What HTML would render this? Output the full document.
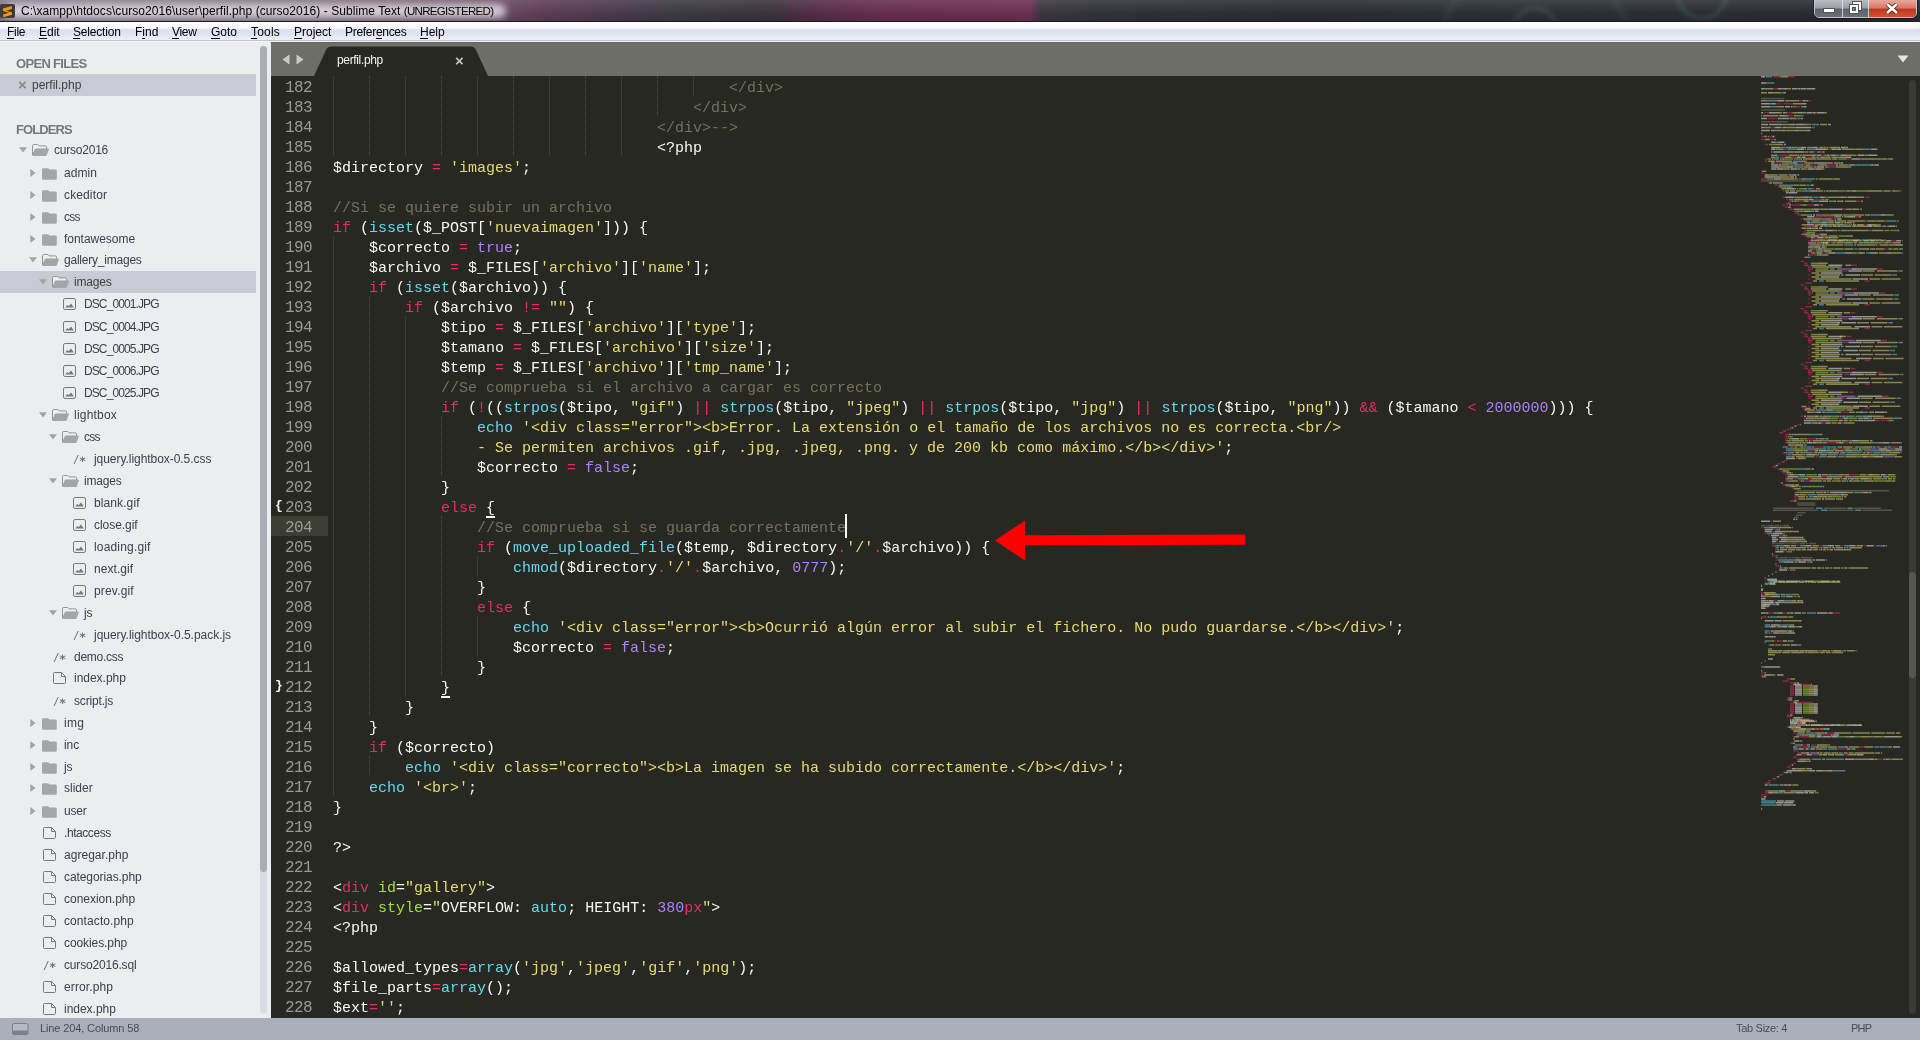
<!DOCTYPE html>
<html lang="es"><head><meta charset="utf-8"><title>perfil.php - Sublime Text</title>
<style>
*{margin:0;padding:0;box-sizing:border-box}
html,body{width:1920px;height:1040px;overflow:hidden;background:#272822}
body{position:relative;font-family:"Liberation Sans",sans-serif;font-size:12px;color:#3f4046}
#title{position:absolute;left:0;top:0;width:1920px;height:22px;background:#2b2c34;overflow:hidden;border-bottom:1px solid #1c1c20}
#wall1{position:absolute;left:0;top:0;width:1920px;height:21px;background:linear-gradient(90deg,#85788a 0,#7a6c7c 300px,#6c5068 490px,#5e3d57 540px,#4d3a4e 610px,#3c3a43 680px,#3a333d 770px,#552d46 815px,#672f4d 880px,#6c3051 1030px,#3c3641 1040px,#32333a 1100px,#2b2c34 1300px,#2b3036 1500px,#2a2b32 1920px)}
#wall2{position:absolute;left:0;top:0;width:1920px;height:21px;background:linear-gradient(180deg,rgba(255,255,255,.10) 0,rgba(255,255,255,0) 60%,rgba(0,0,0,.12) 100%),radial-gradient(circle at 1535px 31px,transparent 17px,rgba(80,125,112,.2) 22px,transparent 28px),radial-gradient(circle at 1702px -6px,transparent 19px,rgba(80,125,112,.2) 24px,transparent 30px),radial-gradient(circle at 1535px 60px,transparent 92px,rgba(70,110,100,.15) 99px,transparent 106px)}
#tglow{position:absolute;z-index:2;left:4px;top:4px;width:502px;height:14px;background:rgba(244,238,245,.74);border-radius:7px;filter:blur(3.5px)}
#logo{position:absolute;z-index:3;left:0;top:4px}
#ttext{position:absolute;z-index:3;left:21px;top:4px;font-size:12px;line-height:15px;color:#000;white-space:pre;letter-spacing:0.06px}#tt2{font-size:11.5px;letter-spacing:-0.68px}
#wbtn{position:absolute;z-index:3;left:1814px;top:-1px;width:103px;height:19px;border:1px solid rgba(235,238,245,.8);border-radius:0 0 5px 5px;display:flex;overflow:hidden;box-shadow:0 0 0 1px rgba(20,20,25,.7)}
.wb{height:18px;position:relative;border-right:1px solid rgba(235,238,245,.75)}
.wmin{width:28px;background:linear-gradient(180deg,#b9bcc2 0,#9a9da4 45%,#5e6169 50%,#6f727b 100%)}
.wmin i{position:absolute;left:9px;top:9px;width:10px;height:3px;background:#fff;box-shadow:0 0 0 1px #50535b}
.wmax{width:27px;background:linear-gradient(180deg,#b9bcc2 0,#9a9da4 45%,#5e6169 50%,#6f727b 100%)}
.wmax i{position:absolute;width:8px;height:8px;border:2px solid #fff;box-shadow:0 0 0 1px #50535b, inset 0 0 0 1px #50535b}
.wmax i.a{left:10px;top:2px}
.wmax i.b{left:7px;top:5px;background:#7c7f88}
.wclose{width:47px;border-right:0;background:linear-gradient(180deg,#e9a99c 0,#d8786a 45%,#c2341d 50%,#d2553a 100%)}
.wclose svg{position:absolute;left:16px;top:3px}
#menu{position:absolute;left:0;top:22px;width:1920px;height:20px;background:linear-gradient(180deg,#ffffff 0,#fbfbfe 4px,#f3f5fb 6.5px,#dde2f0 7.5px,#dde2f1 11px,#e4e8f4 14px,#eef0f8 18px,#bfc3d2 18px,#bfc3d2 19px,#f4f5fa 19px,#f4f5fa 20px)}
.mi{position:absolute;top:3px;font-size:12px;line-height:15px;color:#000;white-space:pre}
.mi .ul{position:absolute;top:13px;height:1px;background:#000}
#side{position:absolute;left:0;top:42px;width:271px;height:976px;background:#ecedf0;overflow:hidden}
#side .hd{position:absolute;left:16px;padding-top:1px;font-weight:bold;font-size:13px;line-height:14px;color:#77787c;white-space:pre}
#side .row{position:absolute;left:0;width:256px;height:22px;margin-top:-42px}
#side .hd{margin-top:-42px}
#side .row.sel{background:#c8cbd3}
.row .nm{position:absolute;top:4px;line-height:15px;font-size:12px;white-space:pre;color:#3f4046}
.row .x{position:absolute;top:3px;line-height:16px;font-size:15px;color:#85868b;font-weight:bold;margin-left:-0.5px}
.row .ic{position:absolute}
.row .cm{position:absolute;top:4px;font-family:"DejaVu Sans Mono",monospace;font-size:11px;line-height:15px;color:#707175;letter-spacing:-0.6px;white-space:pre}.row .cm b{font-weight:bold;font-size:12px;position:relative;top:0px}
#sscroll{position:absolute;left:260px;top:4px;width:7px;height:968px;background:#dadce1;border-radius:3.5px}
#sthumb{position:absolute;left:0;top:0;width:7px;height:826px;background:#aaadb4;border-radius:3.5px}
#tabs{position:absolute;left:271px;top:42px;width:1649px;height:34px;background:#6d6e68}
#tabshadow{position:absolute;left:0;top:0;width:100%;height:1px;background:#63645e}
#tabarrows{position:absolute;left:11px;top:12px}
#tab{position:absolute;left:43px;top:4px}
#tabname{position:absolute;left:66px;top:11px;letter-spacing:-0.35px;font-size:12px;line-height:15px;color:#f4f4f0;white-space:pre}
#tabx{position:absolute;left:184px;top:11px;font-size:15px;line-height:16px;color:#c8c8c2;font-weight:bold}
#tabdd{position:absolute;left:1626px;top:13px}
#ed{position:absolute;left:271px;top:76px;width:1649px;height:942px;background:#272822;overflow:hidden;font-family:"Liberation Mono",monospace;font-size:15px}
#ed>*{position:absolute}
#ed .ln,#ed .cl,#ed .gd,#ed .gb,#ed .bu,#curln,#caret{margin-top:-76px;margin-left:-271px}
.ln{left:272px;width:40px;height:20px;line-height:20px;padding-top:2px;font-size:16px;letter-spacing:-0.6px;text-align:right;color:#999a93;white-space:pre}
#curln{left:271px;top:516px;width:57px;height:20px;background:#3e3d32}
.cl{left:333px;height:20px;line-height:20px;padding-top:3px;color:#f8f8f2;white-space:pre;font-family:"Liberation Mono",monospace;font-size:15px}
.c{color:#75715e}.y{color:#e6db74}.p{color:#ea2a68}.b{color:#66d9ef}.u{color:#ae81ff}.g{color:#a6e22e}
.bu{width:9px;height:2px;background:#f8f8f2}
.gd{width:1px;background:repeating-linear-gradient(180deg,#4f5049 0,#4f5049 1px,transparent 1px,transparent 2px)}
.gb{left:275px;height:20px;line-height:20px;padding-top:0;color:#f8f8f2;font-weight:bold;font-size:13px;letter-spacing:0}
#caret{left:845px;top:514px;width:2px;height:24px;background:#f8f8f0}
#arrow{left:723px;top:443px}
#vtrack{left:1638px;top:4px;width:7px;height:934px;background:#393a35;border-radius:3.5px}
#vthumb{position:absolute;left:0;top:492px;width:7px;height:106px;background:#555650;border-radius:3.5px}
#status{position:absolute;left:0;top:1018px;width:1920px;height:22px;background:#aab0bb}
#status span{position:absolute;top:3px;font-size:11px;line-height:15px;color:#474a52;white-space:pre}
#sbic{position:absolute;left:12px;top:5px}
#mm{left:1479px;top:0}
.cl,.ln,.nm,.mi,.hd,.gb,.cm,.x,#ttext,#tabname,#tabx,#status span{will-change:transform}

</style></head><body>

<div id="title"><div id="tglow"></div><div id="wall1"></div><div id="wall2"></div>
<svg id="logo" width="15" height="14" viewBox="0 0 16 16" preserveAspectRatio="none"><rect width="16" height="16" rx="2" fill="#3d3c3a"/><path d="M3.2 5.2L12.6 2.2V5.6L6.4 7.6L12.8 9.7V12.4L3.4 15V11.9L9.6 9.9L3.2 7.9Z" fill="#f39a17"/></svg>
<span id="ttext"><span id="tt1">C:\xampp\htdocs\curso2016\user\perfil.php (curso2016) - Sublime Text </span><span id="tt2">(UNREGISTERED)</span></span>
<div id="wbtn"><div class="wb wmin"><i></i></div><div class="wb wmax"><i class="a"></i><i class="b"></i></div><div class="wb wclose"><svg width="14" height="11" viewBox="0 0 14 11"><path d="M2 1L12 10M12 1L2 10" stroke="#4a1a14" stroke-width="4.2"/><path d="M2 1L12 10M12 1L2 10" stroke="#fff" stroke-width="2.6"/></svg></div></div>
</div>
<div id="menu"><span class="mi" style="left:7px;letter-spacing:-0.3px">File<i class="ul" style="left:0.0px;width:6.6px"></i></span><span class="mi" style="left:39px">Edit<i class="ul" style="left:0.0px;width:7.6px"></i></span><span class="mi" style="left:73px;letter-spacing:-0.18px">Selection<i class="ul" style="left:0.0px;width:7.4px"></i></span><span class="mi" style="left:135px">Find<i class="ul" style="left:7.3px;width:2.3px"></i></span><span class="mi" style="left:172px;letter-spacing:-0.3px">View<i class="ul" style="left:0.0px;width:7.1px"></i></span><span class="mi" style="left:211px">Goto<i class="ul" style="left:0.0px;width:8.9px"></i></span><span class="mi" style="left:251px;letter-spacing:0.2px">Tools<i class="ul" style="left:0.0px;width:5.8px"></i></span><span class="mi" style="left:294px">Project<i class="ul" style="left:0.0px;width:7.6px"></i></span><span class="mi" style="left:345px;letter-spacing:-0.3px">Preferences<i class="ul" style="left:30.9px;width:6.0px"></i></span><span class="mi" style="left:420px">Help<i class="ul" style="left:0.0px;width:8.3px"></i></span></div>
<div id="side">
<div class="hd" style="top:56px;letter-spacing:-0.68px">OPEN FILES</div>
<div class="row sel" style="top:74px"><span class="x" style="left:18px">×</span><span class="nm" style="left:32px">perfil.php</span></div>
<div class="hd" style="top:122px;letter-spacing:-0.92px">FOLDERS</div>
<div class="row" style="top:139px">
<svg class="ic" style="left:19px;top:8px" width="8" height="6" viewBox="0 0 8 6"><path d="M0 0.3H8L4 5.6Z" fill="#a2a3a6"/></svg>
<svg class="ic" style="left:32px;top:5px" width="17" height="12" viewBox="0 0 17 12"><path d="M1.7 0.5H5.4Q6.2 0.5 6.6 1.2L7 1.9H13.3Q14.5 1.9 14.5 3.1V5.4H3.9L0.5 11V1.7Q0.5 0.5 1.7 0.5Z" fill="#eeeff2" stroke="#939497" stroke-width="1"/><path d="M4.2 4.6H16Q17.2 4.6 16.8 5.7L14.9 11Q14.5 12 13.5 12H1.2Q0.1 12 0.5 11L2.6 5.6Q3 4.6 4.2 4.6Z" fill="#a4a5a8"/></svg>
<span class="nm" style="left:54px;letter-spacing:-0.22px">curso2016</span></div>
<div class="row" style="top:162px">
<svg class="ic" style="left:30px;top:7px" width="6" height="8" viewBox="0 0 6 8"><path d="M0.3 0V8L5.6 4Z" fill="#a2a3a6"/></svg>
<svg class="ic" style="left:42px;top:6px" width="15" height="12" viewBox="0 0 15 12"><path d="M1.2 0.3H5.6Q6.6 0.3 7 1.1L7.3 1.6H13.6Q14.8 1.6 14.8 2.8V10.6Q14.8 11.8 13.6 11.8H1.2Q0 11.8 0 10.6V1.5Q0 0.3 1.2 0.3Z" fill="#a5a6a9"/></svg>
<span class="nm" style="left:64px;letter-spacing:0.08px">admin</span></div>
<div class="row" style="top:184px">
<svg class="ic" style="left:30px;top:7px" width="6" height="8" viewBox="0 0 6 8"><path d="M0.3 0V8L5.6 4Z" fill="#a2a3a6"/></svg>
<svg class="ic" style="left:42px;top:6px" width="15" height="12" viewBox="0 0 15 12"><path d="M1.2 0.3H5.6Q6.6 0.3 7 1.1L7.3 1.6H13.6Q14.8 1.6 14.8 2.8V10.6Q14.8 11.8 13.6 11.8H1.2Q0 11.8 0 10.6V1.5Q0 0.3 1.2 0.3Z" fill="#a5a6a9"/></svg>
<span class="nm" style="left:64px;letter-spacing:0.13px">ckeditor</span></div>
<div class="row" style="top:206px">
<svg class="ic" style="left:30px;top:7px" width="6" height="8" viewBox="0 0 6 8"><path d="M0.3 0V8L5.6 4Z" fill="#a2a3a6"/></svg>
<svg class="ic" style="left:42px;top:6px" width="15" height="12" viewBox="0 0 15 12"><path d="M1.2 0.3H5.6Q6.6 0.3 7 1.1L7.3 1.6H13.6Q14.8 1.6 14.8 2.8V10.6Q14.8 11.8 13.6 11.8H1.2Q0 11.8 0 10.6V1.5Q0 0.3 1.2 0.3Z" fill="#a5a6a9"/></svg>
<span class="nm" style="left:64px;letter-spacing:-0.80px">css</span></div>
<div class="row" style="top:228px">
<svg class="ic" style="left:30px;top:7px" width="6" height="8" viewBox="0 0 6 8"><path d="M0.3 0V8L5.6 4Z" fill="#a2a3a6"/></svg>
<svg class="ic" style="left:42px;top:6px" width="15" height="12" viewBox="0 0 15 12"><path d="M1.2 0.3H5.6Q6.6 0.3 7 1.1L7.3 1.6H13.6Q14.8 1.6 14.8 2.8V10.6Q14.8 11.8 13.6 11.8H1.2Q0 11.8 0 10.6V1.5Q0 0.3 1.2 0.3Z" fill="#a5a6a9"/></svg>
<span class="nm" style="left:64px;letter-spacing:-0.03px">fontawesome</span></div>
<div class="row" style="top:249px">
<svg class="ic" style="left:29px;top:8px" width="8" height="6" viewBox="0 0 8 6"><path d="M0 0.3H8L4 5.6Z" fill="#a2a3a6"/></svg>
<svg class="ic" style="left:42px;top:5px" width="17" height="12" viewBox="0 0 17 12"><path d="M1.7 0.5H5.4Q6.2 0.5 6.6 1.2L7 1.9H13.3Q14.5 1.9 14.5 3.1V5.4H3.9L0.5 11V1.7Q0.5 0.5 1.7 0.5Z" fill="#eeeff2" stroke="#939497" stroke-width="1"/><path d="M4.2 4.6H16Q17.2 4.6 16.8 5.7L14.9 11Q14.5 12 13.5 12H1.2Q0.1 12 0.5 11L2.6 5.6Q3 4.6 4.2 4.6Z" fill="#a4a5a8"/></svg>
<span class="nm" style="left:64px;letter-spacing:-0.22px">gallery_images</span></div>
<div class="row sel" style="top:271px">
<svg class="ic" style="left:39px;top:8px" width="8" height="6" viewBox="0 0 8 6"><path d="M0 0.3H8L4 5.6Z" fill="#a2a3a6"/></svg>
<svg class="ic" style="left:52px;top:5px" width="17" height="12" viewBox="0 0 17 12"><path d="M1.7 0.5H5.4Q6.2 0.5 6.6 1.2L7 1.9H13.3Q14.5 1.9 14.5 3.1V5.4H3.9L0.5 11V1.7Q0.5 0.5 1.7 0.5Z" fill="#eeeff2" stroke="#939497" stroke-width="1"/><path d="M4.2 4.6H16Q17.2 4.6 16.8 5.7L14.9 11Q14.5 12 13.5 12H1.2Q0.1 12 0.5 11L2.6 5.6Q3 4.6 4.2 4.6Z" fill="#a4a5a8"/></svg>
<span class="nm" style="left:74px;letter-spacing:-0.18px">images</span></div>
<div class="row" style="top:293px">
<svg class="ic" style="left:63px;top:5px" width="13" height="12" viewBox="0 0 13 12"><rect x="0.5" y="0.5" width="12" height="11" rx="1.6" fill="none" stroke="#77787b" stroke-width="1"/><path d="M2.2 9.6L4.3 6.9L5.6 8.2L8 5.6L10.8 9.6Z" fill="#77787b"/></svg>
<span class="nm" style="left:84px;letter-spacing:-0.90px">DSC_0001.JPG</span></div>
<div class="row" style="top:316px">
<svg class="ic" style="left:63px;top:5px" width="13" height="12" viewBox="0 0 13 12"><rect x="0.5" y="0.5" width="12" height="11" rx="1.6" fill="none" stroke="#77787b" stroke-width="1"/><path d="M2.2 9.6L4.3 6.9L5.6 8.2L8 5.6L10.8 9.6Z" fill="#77787b"/></svg>
<span class="nm" style="left:84px;letter-spacing:-0.90px">DSC_0004.JPG</span></div>
<div class="row" style="top:338px">
<svg class="ic" style="left:63px;top:5px" width="13" height="12" viewBox="0 0 13 12"><rect x="0.5" y="0.5" width="12" height="11" rx="1.6" fill="none" stroke="#77787b" stroke-width="1"/><path d="M2.2 9.6L4.3 6.9L5.6 8.2L8 5.6L10.8 9.6Z" fill="#77787b"/></svg>
<span class="nm" style="left:84px;letter-spacing:-0.90px">DSC_0005.JPG</span></div>
<div class="row" style="top:360px">
<svg class="ic" style="left:63px;top:5px" width="13" height="12" viewBox="0 0 13 12"><rect x="0.5" y="0.5" width="12" height="11" rx="1.6" fill="none" stroke="#77787b" stroke-width="1"/><path d="M2.2 9.6L4.3 6.9L5.6 8.2L8 5.6L10.8 9.6Z" fill="#77787b"/></svg>
<span class="nm" style="left:84px;letter-spacing:-0.90px">DSC_0006.JPG</span></div>
<div class="row" style="top:382px">
<svg class="ic" style="left:63px;top:5px" width="13" height="12" viewBox="0 0 13 12"><rect x="0.5" y="0.5" width="12" height="11" rx="1.6" fill="none" stroke="#77787b" stroke-width="1"/><path d="M2.2 9.6L4.3 6.9L5.6 8.2L8 5.6L10.8 9.6Z" fill="#77787b"/></svg>
<span class="nm" style="left:84px;letter-spacing:-0.90px">DSC_0025.JPG</span></div>
<div class="row" style="top:404px">
<svg class="ic" style="left:39px;top:8px" width="8" height="6" viewBox="0 0 8 6"><path d="M0 0.3H8L4 5.6Z" fill="#a2a3a6"/></svg>
<svg class="ic" style="left:52px;top:5px" width="17" height="12" viewBox="0 0 17 12"><path d="M1.7 0.5H5.4Q6.2 0.5 6.6 1.2L7 1.9H13.3Q14.5 1.9 14.5 3.1V5.4H3.9L0.5 11V1.7Q0.5 0.5 1.7 0.5Z" fill="#eeeff2" stroke="#939497" stroke-width="1"/><path d="M4.2 4.6H16Q17.2 4.6 16.8 5.7L14.9 11Q14.5 12 13.5 12H1.2Q0.1 12 0.5 11L2.6 5.6Q3 4.6 4.2 4.6Z" fill="#a4a5a8"/></svg>
<span class="nm" style="left:74px;letter-spacing:0.21px">lightbox</span></div>
<div class="row" style="top:426px">
<svg class="ic" style="left:49px;top:8px" width="8" height="6" viewBox="0 0 8 6"><path d="M0 0.3H8L4 5.6Z" fill="#a2a3a6"/></svg>
<svg class="ic" style="left:62px;top:5px" width="17" height="12" viewBox="0 0 17 12"><path d="M1.7 0.5H5.4Q6.2 0.5 6.6 1.2L7 1.9H13.3Q14.5 1.9 14.5 3.1V5.4H3.9L0.5 11V1.7Q0.5 0.5 1.7 0.5Z" fill="#eeeff2" stroke="#939497" stroke-width="1"/><path d="M4.2 4.6H16Q17.2 4.6 16.8 5.7L14.9 11Q14.5 12 13.5 12H1.2Q0.1 12 0.5 11L2.6 5.6Q3 4.6 4.2 4.6Z" fill="#a4a5a8"/></svg>
<span class="nm" style="left:84px;letter-spacing:-0.80px">css</span></div>
<div class="row" style="top:448px">
<span class="cm" style="left:73px">/<b>∗</b></span>
<span class="nm" style="left:94px;letter-spacing:-0.05px">jquery.lightbox-0.5.css</span></div>
<div class="row" style="top:470px">
<svg class="ic" style="left:49px;top:8px" width="8" height="6" viewBox="0 0 8 6"><path d="M0 0.3H8L4 5.6Z" fill="#a2a3a6"/></svg>
<svg class="ic" style="left:62px;top:5px" width="17" height="12" viewBox="0 0 17 12"><path d="M1.7 0.5H5.4Q6.2 0.5 6.6 1.2L7 1.9H13.3Q14.5 1.9 14.5 3.1V5.4H3.9L0.5 11V1.7Q0.5 0.5 1.7 0.5Z" fill="#eeeff2" stroke="#939497" stroke-width="1"/><path d="M4.2 4.6H16Q17.2 4.6 16.8 5.7L14.9 11Q14.5 12 13.5 12H1.2Q0.1 12 0.5 11L2.6 5.6Q3 4.6 4.2 4.6Z" fill="#a4a5a8"/></svg>
<span class="nm" style="left:84px;letter-spacing:-0.18px">images</span></div>
<div class="row" style="top:492px">
<svg class="ic" style="left:73px;top:5px" width="13" height="12" viewBox="0 0 13 12"><rect x="0.5" y="0.5" width="12" height="11" rx="1.6" fill="none" stroke="#77787b" stroke-width="1"/><path d="M2.2 9.6L4.3 6.9L5.6 8.2L8 5.6L10.8 9.6Z" fill="#77787b"/></svg>
<span class="nm" style="left:94px;letter-spacing:0.10px">blank.gif</span></div>
<div class="row" style="top:514px">
<svg class="ic" style="left:73px;top:5px" width="13" height="12" viewBox="0 0 13 12"><rect x="0.5" y="0.5" width="12" height="11" rx="1.6" fill="none" stroke="#77787b" stroke-width="1"/><path d="M2.2 9.6L4.3 6.9L5.6 8.2L8 5.6L10.8 9.6Z" fill="#77787b"/></svg>
<span class="nm" style="left:94px;letter-spacing:-0.05px">close.gif</span></div>
<div class="row" style="top:536px">
<svg class="ic" style="left:73px;top:5px" width="13" height="12" viewBox="0 0 13 12"><rect x="0.5" y="0.5" width="12" height="11" rx="1.6" fill="none" stroke="#77787b" stroke-width="1"/><path d="M2.2 9.6L4.3 6.9L5.6 8.2L8 5.6L10.8 9.6Z" fill="#77787b"/></svg>
<span class="nm" style="left:94px;letter-spacing:0.17px">loading.gif</span></div>
<div class="row" style="top:558px">
<svg class="ic" style="left:73px;top:5px" width="13" height="12" viewBox="0 0 13 12"><rect x="0.5" y="0.5" width="12" height="11" rx="1.6" fill="none" stroke="#77787b" stroke-width="1"/><path d="M2.2 9.6L4.3 6.9L5.6 8.2L8 5.6L10.8 9.6Z" fill="#77787b"/></svg>
<span class="nm" style="left:94px;letter-spacing:0.05px">next.gif</span></div>
<div class="row" style="top:580px">
<svg class="ic" style="left:73px;top:5px" width="13" height="12" viewBox="0 0 13 12"><rect x="0.5" y="0.5" width="12" height="11" rx="1.6" fill="none" stroke="#77787b" stroke-width="1"/><path d="M2.2 9.6L4.3 6.9L5.6 8.2L8 5.6L10.8 9.6Z" fill="#77787b"/></svg>
<span class="nm" style="left:94px;letter-spacing:0.17px">prev.gif</span></div>
<div class="row" style="top:602px">
<svg class="ic" style="left:49px;top:8px" width="8" height="6" viewBox="0 0 8 6"><path d="M0 0.3H8L4 5.6Z" fill="#a2a3a6"/></svg>
<svg class="ic" style="left:62px;top:5px" width="17" height="12" viewBox="0 0 17 12"><path d="M1.7 0.5H5.4Q6.2 0.5 6.6 1.2L7 1.9H13.3Q14.5 1.9 14.5 3.1V5.4H3.9L0.5 11V1.7Q0.5 0.5 1.7 0.5Z" fill="#eeeff2" stroke="#939497" stroke-width="1"/><path d="M4.2 4.6H16Q17.2 4.6 16.8 5.7L14.9 11Q14.5 12 13.5 12H1.2Q0.1 12 0.5 11L2.6 5.6Q3 4.6 4.2 4.6Z" fill="#a4a5a8"/></svg>
<span class="nm" style="left:84px;letter-spacing:-0.29px">js</span></div>
<div class="row" style="top:624px">
<span class="cm" style="left:73px">/<b>∗</b></span>
<span class="nm" style="left:94px;letter-spacing:-0.03px">jquery.lightbox-0.5.pack.js</span></div>
<div class="row" style="top:646px">
<span class="cm" style="left:53px">/<b>∗</b></span>
<span class="nm" style="left:74px;letter-spacing:-0.28px">demo.css</span></div>
<div class="row" style="top:667px">
<svg class="ic" style="left:53px;top:5px" width="13" height="12" viewBox="0 0 13 12"><path d="M1.5 0.5H8.5L12.5 4.5V10.5Q12.5 11.5 11.5 11.5H1.5Q0.5 11.5 0.5 10.5V1.5Q0.5 0.5 1.5 0.5Z" fill="none" stroke="#77787b" stroke-width="1"/><path d="M8.5 0.5V4.5H12.5" fill="none" stroke="#77787b" stroke-width="1"/></svg>
<span class="nm" style="left:74px;letter-spacing:-0.02px">index.php</span></div>
<div class="row" style="top:690px">
<span class="cm" style="left:53px">/<b>∗</b></span>
<span class="nm" style="left:74px;letter-spacing:-0.17px">script.js</span></div>
<div class="row" style="top:712px">
<svg class="ic" style="left:30px;top:7px" width="6" height="8" viewBox="0 0 6 8"><path d="M0.3 0V8L5.6 4Z" fill="#a2a3a6"/></svg>
<svg class="ic" style="left:42px;top:6px" width="15" height="12" viewBox="0 0 15 12"><path d="M1.2 0.3H5.6Q6.6 0.3 7 1.1L7.3 1.6H13.6Q14.8 1.6 14.8 2.8V10.6Q14.8 11.8 13.6 11.8H1.2Q0 11.8 0 10.6V1.5Q0 0.3 1.2 0.3Z" fill="#a5a6a9"/></svg>
<span class="nm" style="left:64px;letter-spacing:0.25px">img</span></div>
<div class="row" style="top:734px">
<svg class="ic" style="left:30px;top:7px" width="6" height="8" viewBox="0 0 6 8"><path d="M0.3 0V8L5.6 4Z" fill="#a2a3a6"/></svg>
<svg class="ic" style="left:42px;top:6px" width="15" height="12" viewBox="0 0 15 12"><path d="M1.2 0.3H5.6Q6.6 0.3 7 1.1L7.3 1.6H13.6Q14.8 1.6 14.8 2.8V10.6Q14.8 11.8 13.6 11.8H1.2Q0 11.8 0 10.6V1.5Q0 0.3 1.2 0.3Z" fill="#a5a6a9"/></svg>
<span class="nm" style="left:64px;letter-spacing:-0.08px">inc</span></div>
<div class="row" style="top:756px">
<svg class="ic" style="left:30px;top:7px" width="6" height="8" viewBox="0 0 6 8"><path d="M0.3 0V8L5.6 4Z" fill="#a2a3a6"/></svg>
<svg class="ic" style="left:42px;top:6px" width="15" height="12" viewBox="0 0 15 12"><path d="M1.2 0.3H5.6Q6.6 0.3 7 1.1L7.3 1.6H13.6Q14.8 1.6 14.8 2.8V10.6Q14.8 11.8 13.6 11.8H1.2Q0 11.8 0 10.6V1.5Q0 0.3 1.2 0.3Z" fill="#a5a6a9"/></svg>
<span class="nm" style="left:64px;letter-spacing:-0.29px">js</span></div>
<div class="row" style="top:777px">
<svg class="ic" style="left:30px;top:7px" width="6" height="8" viewBox="0 0 6 8"><path d="M0.3 0V8L5.6 4Z" fill="#a2a3a6"/></svg>
<svg class="ic" style="left:42px;top:6px" width="15" height="12" viewBox="0 0 15 12"><path d="M1.2 0.3H5.6Q6.6 0.3 7 1.1L7.3 1.6H13.6Q14.8 1.6 14.8 2.8V10.6Q14.8 11.8 13.6 11.8H1.2Q0 11.8 0 10.6V1.5Q0 0.3 1.2 0.3Z" fill="#a5a6a9"/></svg>
<span class="nm" style="left:64px">slider</span></div>
<div class="row" style="top:800px">
<svg class="ic" style="left:30px;top:7px" width="6" height="8" viewBox="0 0 6 8"><path d="M0.3 0V8L5.6 4Z" fill="#a2a3a6"/></svg>
<svg class="ic" style="left:42px;top:6px" width="15" height="12" viewBox="0 0 15 12"><path d="M1.2 0.3H5.6Q6.6 0.3 7 1.1L7.3 1.6H13.6Q14.8 1.6 14.8 2.8V10.6Q14.8 11.8 13.6 11.8H1.2Q0 11.8 0 10.6V1.5Q0 0.3 1.2 0.3Z" fill="#a5a6a9"/></svg>
<span class="nm" style="left:64px;letter-spacing:-0.18px">user</span></div>
<div class="row" style="top:822px">
<svg class="ic" style="left:43px;top:5px" width="13" height="12" viewBox="0 0 13 12"><path d="M1.5 0.5H8.5L12.5 4.5V10.5Q12.5 11.5 11.5 11.5H1.5Q0.5 11.5 0.5 10.5V1.5Q0.5 0.5 1.5 0.5Z" fill="none" stroke="#77787b" stroke-width="1"/><path d="M8.5 0.5V4.5H12.5" fill="none" stroke="#77787b" stroke-width="1"/></svg>
<span class="nm" style="left:64px;letter-spacing:-0.43px">.htaccess</span></div>
<div class="row" style="top:844px">
<svg class="ic" style="left:43px;top:5px" width="13" height="12" viewBox="0 0 13 12"><path d="M1.5 0.5H8.5L12.5 4.5V10.5Q12.5 11.5 11.5 11.5H1.5Q0.5 11.5 0.5 10.5V1.5Q0.5 0.5 1.5 0.5Z" fill="none" stroke="#77787b" stroke-width="1"/><path d="M8.5 0.5V4.5H12.5" fill="none" stroke="#77787b" stroke-width="1"/></svg>
<span class="nm" style="left:64px;letter-spacing:0.03px">agregar.php</span></div>
<div class="row" style="top:866px">
<svg class="ic" style="left:43px;top:5px" width="13" height="12" viewBox="0 0 13 12"><path d="M1.5 0.5H8.5L12.5 4.5V10.5Q12.5 11.5 11.5 11.5H1.5Q0.5 11.5 0.5 10.5V1.5Q0.5 0.5 1.5 0.5Z" fill="none" stroke="#77787b" stroke-width="1"/><path d="M8.5 0.5V4.5H12.5" fill="none" stroke="#77787b" stroke-width="1"/></svg>
<span class="nm" style="left:64px;letter-spacing:-0.08px">categorias.php</span></div>
<div class="row" style="top:888px">
<svg class="ic" style="left:43px;top:5px" width="13" height="12" viewBox="0 0 13 12"><path d="M1.5 0.5H8.5L12.5 4.5V10.5Q12.5 11.5 11.5 11.5H1.5Q0.5 11.5 0.5 10.5V1.5Q0.5 0.5 1.5 0.5Z" fill="none" stroke="#77787b" stroke-width="1"/><path d="M8.5 0.5V4.5H12.5" fill="none" stroke="#77787b" stroke-width="1"/></svg>
<span class="nm" style="left:64px;letter-spacing:-0.02px">conexion.php</span></div>
<div class="row" style="top:910px">
<svg class="ic" style="left:43px;top:5px" width="13" height="12" viewBox="0 0 13 12"><path d="M1.5 0.5H8.5L12.5 4.5V10.5Q12.5 11.5 11.5 11.5H1.5Q0.5 11.5 0.5 10.5V1.5Q0.5 0.5 1.5 0.5Z" fill="none" stroke="#77787b" stroke-width="1"/><path d="M8.5 0.5V4.5H12.5" fill="none" stroke="#77787b" stroke-width="1"/></svg>
<span class="nm" style="left:64px;letter-spacing:0.09px">contacto.php</span></div>
<div class="row" style="top:932px">
<svg class="ic" style="left:43px;top:5px" width="13" height="12" viewBox="0 0 13 12"><path d="M1.5 0.5H8.5L12.5 4.5V10.5Q12.5 11.5 11.5 11.5H1.5Q0.5 11.5 0.5 10.5V1.5Q0.5 0.5 1.5 0.5Z" fill="none" stroke="#77787b" stroke-width="1"/><path d="M8.5 0.5V4.5H12.5" fill="none" stroke="#77787b" stroke-width="1"/></svg>
<span class="nm" style="left:64px;letter-spacing:-0.09px">cookies.php</span></div>
<div class="row" style="top:954px">
<span class="cm" style="left:43px">/<b>∗</b></span>
<span class="nm" style="left:64px;letter-spacing:-0.18px">curso2016.sql</span></div>
<div class="row" style="top:976px">
<svg class="ic" style="left:43px;top:5px" width="13" height="12" viewBox="0 0 13 12"><path d="M1.5 0.5H8.5L12.5 4.5V10.5Q12.5 11.5 11.5 11.5H1.5Q0.5 11.5 0.5 10.5V1.5Q0.5 0.5 1.5 0.5Z" fill="none" stroke="#77787b" stroke-width="1"/><path d="M8.5 0.5V4.5H12.5" fill="none" stroke="#77787b" stroke-width="1"/></svg>
<span class="nm" style="left:64px;letter-spacing:0.12px">error.php</span></div>
<div class="row" style="top:998px">
<svg class="ic" style="left:43px;top:5px" width="13" height="12" viewBox="0 0 13 12"><path d="M1.5 0.5H8.5L12.5 4.5V10.5Q12.5 11.5 11.5 11.5H1.5Q0.5 11.5 0.5 10.5V1.5Q0.5 0.5 1.5 0.5Z" fill="none" stroke="#77787b" stroke-width="1"/><path d="M8.5 0.5V4.5H12.5" fill="none" stroke="#77787b" stroke-width="1"/></svg>
<span class="nm" style="left:64px;letter-spacing:-0.02px">index.php</span></div>
<div id="sscroll"><div id="sthumb"></div></div>
</div>
<div id="tabs"><div id="tabshadow"></div>
<svg id="tabarrows" width="24" height="12" viewBox="0 0 24 12"><path d="M7.5 0.5V10.5L0.5 5.5Z M14.5 0.5V10.5L21.5 5.5Z" fill="#c9cac5"/></svg>
<svg id="tab" width="176" height="30" viewBox="0 0 176 30"><path d="M0 30L12.5 3Q13.8 0.5 16.5 0.5H157.5Q160.2 0.5 161.5 3L174 30Z" fill="#272822"/></svg>
<span id="tabname">perfil.php</span><span id="tabx">×</span>
<svg id="tabdd" width="12" height="8" viewBox="0 0 12 8"><path d="M0.5 0.5H11.5L6 7.5Z" fill="#e4e4e0"/></svg>
</div>
<div id="ed">
<div id="curln"></div>
<div class="ln" style="top:76px">182</div>
<div class="ln" style="top:96px">183</div>
<div class="ln" style="top:116px">184</div>
<div class="ln" style="top:136px">185</div>
<div class="ln" style="top:156px">186</div>
<div class="ln" style="top:176px">187</div>
<div class="ln" style="top:196px">188</div>
<div class="ln" style="top:216px">189</div>
<div class="ln" style="top:236px">190</div>
<div class="ln" style="top:256px">191</div>
<div class="ln" style="top:276px">192</div>
<div class="ln" style="top:296px">193</div>
<div class="ln" style="top:316px">194</div>
<div class="ln" style="top:336px">195</div>
<div class="ln" style="top:356px">196</div>
<div class="ln" style="top:376px">197</div>
<div class="ln" style="top:396px">198</div>
<div class="ln" style="top:416px">199</div>
<div class="ln" style="top:436px">200</div>
<div class="ln" style="top:456px">201</div>
<div class="ln" style="top:476px">202</div>
<div class="ln" style="top:496px">203</div>
<div class="ln cur" style="top:516px">204</div>
<div class="ln" style="top:536px">205</div>
<div class="ln" style="top:556px">206</div>
<div class="ln" style="top:576px">207</div>
<div class="ln" style="top:596px">208</div>
<div class="ln" style="top:616px">209</div>
<div class="ln" style="top:636px">210</div>
<div class="ln" style="top:656px">211</div>
<div class="ln" style="top:676px">212</div>
<div class="ln" style="top:696px">213</div>
<div class="ln" style="top:716px">214</div>
<div class="ln" style="top:736px">215</div>
<div class="ln" style="top:756px">216</div>
<div class="ln" style="top:776px">217</div>
<div class="ln" style="top:796px">218</div>
<div class="ln" style="top:816px">219</div>
<div class="ln" style="top:836px">220</div>
<div class="ln" style="top:856px">221</div>
<div class="ln" style="top:876px">222</div>
<div class="ln" style="top:896px">223</div>
<div class="ln" style="top:916px">224</div>
<div class="ln" style="top:936px">225</div>
<div class="ln" style="top:956px">226</div>
<div class="ln" style="top:976px">227</div>
<div class="ln" style="top:996px">228</div>
<i class="gd" style="left:333px;top:76px;height:80px"></i>
<i class="gd" style="left:333px;top:236px;height:560px"></i>
<i class="gd" style="left:369px;top:76px;height:80px"></i>
<i class="gd" style="left:369px;top:296px;height:420px"></i>
<i class="gd" style="left:369px;top:756px;height:20px"></i>
<i class="gd" style="left:405px;top:76px;height:80px"></i>
<i class="gd" style="left:405px;top:316px;height:380px"></i>
<i class="gd" style="left:441px;top:76px;height:80px"></i>
<i class="gd" style="left:441px;top:416px;height:60px"></i>
<i class="gd" style="left:441px;top:516px;height:160px"></i>
<i class="gd" style="left:477px;top:76px;height:80px"></i>
<i class="gd" style="left:477px;top:556px;height:20px"></i>
<i class="gd" style="left:477px;top:616px;height:40px"></i>
<i class="gd" style="left:513px;top:76px;height:80px"></i>
<i class="gd" style="left:549px;top:76px;height:80px"></i>
<i class="gd" style="left:585px;top:76px;height:80px"></i>
<i class="gd" style="left:621px;top:76px;height:80px"></i>
<i class="gd" style="left:657px;top:76px;height:40px"></i>
<i class="gd" style="left:693px;top:76px;height:20px"></i>
<pre class="cl" style="top:76px">                                            <span class="c">&lt;/div&gt;</span></pre>
<pre class="cl" style="top:96px">                                        <span class="c">&lt;/div&gt;</span></pre>
<pre class="cl" style="top:116px">                                    <span class="c">&lt;/div&gt;--&gt;</span></pre>
<pre class="cl" style="top:136px">                                    &lt;?php</pre>
<pre class="cl" style="top:156px">$directory <span class="p">=</span> <span class="y">'images'</span>;</pre>
<pre class="cl" style="top:176px"></pre>
<pre class="cl" style="top:196px"><span class="c">//Si se quiere subir un archivo</span></pre>
<pre class="cl" style="top:216px"><span class="p">if</span> (<span class="b">isset</span>($_POST[<span class="y">'nuevaimagen'</span>])) {</pre>
<pre class="cl" style="top:236px">    $correcto <span class="p">=</span> <span class="u">true</span>;</pre>
<pre class="cl" style="top:256px">    $archivo <span class="p">=</span> $_FILES[<span class="y">'archivo'</span>][<span class="y">'name'</span>];</pre>
<pre class="cl" style="top:276px">    <span class="p">if</span> (<span class="b">isset</span>($archivo)) {</pre>
<pre class="cl" style="top:296px">        <span class="p">if</span> ($archivo <span class="p">!=</span> <span class="y">""</span>) {</pre>
<pre class="cl" style="top:316px">            $tipo <span class="p">=</span> $_FILES[<span class="y">'archivo'</span>][<span class="y">'type'</span>];</pre>
<pre class="cl" style="top:336px">            $tamano <span class="p">=</span> $_FILES[<span class="y">'archivo'</span>][<span class="y">'size'</span>];</pre>
<pre class="cl" style="top:356px">            $temp <span class="p">=</span> $_FILES[<span class="y">'archivo'</span>][<span class="y">'tmp_name'</span>];</pre>
<pre class="cl" style="top:376px">            <span class="c">//Se comprueba si el archivo a cargar es correcto</span></pre>
<pre class="cl" style="top:396px">            <span class="p">if</span> (<span class="p">!</span>((<span class="b">strpos</span>($tipo, <span class="y">"gif"</span>) <span class="p">||</span> <span class="b">strpos</span>($tipo, <span class="y">"jpeg"</span>) <span class="p">||</span> <span class="b">strpos</span>($tipo, <span class="y">"jpg"</span>) <span class="p">||</span> <span class="b">strpos</span>($tipo, <span class="y">"png"</span>)) <span class="p">&amp;&amp;</span> ($tamano <span class="p">&lt;</span> <span class="u">2000000</span>))) {</pre>
<pre class="cl" style="top:416px">                <span class="b">echo</span> <span class="y">'&lt;div class="error"&gt;&lt;b&gt;Error. La extensión o el tamaño de los archivos no es correcta.&lt;br/&gt;</span></pre>
<pre class="cl" style="top:436px">                <span class="y">- Se permiten archivos .gif, .jpg, .jpeg, .png. y de 200 kb como máximo.&lt;/b&gt;&lt;/div&gt;'</span>;</pre>
<pre class="cl" style="top:456px">                $correcto <span class="p">=</span> <span class="u">false</span>;</pre>
<pre class="cl" style="top:476px">            }</pre>
<pre class="cl" style="top:496px">            <span class="p">else</span> {</pre>
<pre class="cl" style="top:516px">                <span class="c">//Se comprueba si se guarda correctamente</span></pre>
<pre class="cl" style="top:536px">                <span class="p">if</span> (<span class="b">move_uploaded_file</span>($temp, $directory<span class="p">.</span><span class="y">'/'</span><span class="p">.</span>$archivo)) {</pre>
<pre class="cl" style="top:556px">                    <span class="b">chmod</span>($directory<span class="p">.</span><span class="y">'/'</span><span class="p">.</span>$archivo, <span class="u">0777</span>);</pre>
<pre class="cl" style="top:576px">                }</pre>
<pre class="cl" style="top:596px">                <span class="p">else</span> {</pre>
<pre class="cl" style="top:616px">                    <span class="b">echo</span> <span class="y">'&lt;div class="error"&gt;&lt;b&gt;Ocurrió algún error al subir el fichero. No pudo guardarse.&lt;/b&gt;&lt;/div&gt;'</span>;</pre>
<pre class="cl" style="top:636px">                    $correcto <span class="p">=</span> <span class="u">false</span>;</pre>
<pre class="cl" style="top:656px">                }</pre>
<pre class="cl" style="top:676px">            }</pre>
<pre class="cl" style="top:696px">        }</pre>
<pre class="cl" style="top:716px">    }</pre>
<pre class="cl" style="top:736px">    <span class="p">if</span> ($correcto)</pre>
<pre class="cl" style="top:756px">        <span class="b">echo</span> <span class="y">'&lt;div class="correcto"&gt;&lt;b&gt;La imagen se ha subido correctamente.&lt;/b&gt;&lt;/div&gt;'</span>;</pre>
<pre class="cl" style="top:776px">    <span class="b">echo</span> <span class="y">'&lt;br&gt;'</span>;</pre>
<pre class="cl" style="top:796px">}</pre>
<pre class="cl" style="top:816px"></pre>
<pre class="cl" style="top:836px">?&gt;</pre>
<pre class="cl" style="top:856px"></pre>
<pre class="cl" style="top:876px">&lt;<span class="p">div</span> <span class="g">id</span>=<span class="y">"gallery"</span>&gt;</pre>
<pre class="cl" style="top:896px">&lt;<span class="p">div</span> <span class="g">style</span>=<span class="y">"</span>OVERFLOW: <span class="b">auto</span>; HEIGHT: <span class="u">380</span><span class="p">px</span><span class="y">"</span>&gt;</pre>
<pre class="cl" style="top:916px">&lt;?php</pre>
<pre class="cl" style="top:936px"></pre>
<pre class="cl" style="top:956px">$allowed_types<span class="p">=</span><span class="b">array</span>(<span class="y">'jpg'</span>,<span class="y">'jpeg'</span>,<span class="y">'gif'</span>,<span class="y">'png'</span>);</pre>
<pre class="cl" style="top:976px">$file_parts<span class="p">=</span><span class="b">array</span>();</pre>
<pre class="cl" style="top:996px">$ext<span class="p">=</span><span class="y">''</span>;</pre>
<span class="gb" style="top:496px">{</span><span class="gb" style="top:676px">}</span><i class="bu" style="left:486px;top:516px"></i><i class="bu" style="left:441px;top:696px"></i>
<div id="caret"></div>
<svg id="arrow" width="256" height="44" viewBox="0 0 256 44"><path d="M1 21.5L31 1.5V16.2L251 15.4V25.7L31 26.3V41.5Z" fill="#fe0000"/></svg>
<svg id="mm" width="160" height="942" viewBox="1750 76 160 942">
<path d="M1761.1 76.8h4.0M1781.5 76.8h2.0M1761.1 83.0h5.0M1761.1 88.7h1.2M1762.3 88.7h2.0M1777.7 88.7h5.0M1783.1 88.7h4.0M1792.0 88.7h5.0M1797.4 88.7h3.0M1800.8 88.7h1.2M1802.0 88.7h4.0M1806.4 88.7h4.0M1810.4 88.7h4.9M1761.1 92.8h2.0M1768.0 92.8h4.0M1784.2 92.8h1.7M1761.1 100.8h1.2M1777.3 100.8h7.0M1797.8 100.8h1.2M1803.0 100.8h1.2M1761.1 103.8h9.0M1770.5 103.8h4.0M1774.5 103.8h1.2M1802.1 103.8h4.3M1761.1 106.7h2.0M1763.1 106.7h7.0M1785.0 106.7h5.0M1790.9 106.7h1.2M1804.0 106.7h2.4M1761.1 112.8h2.0M1769.0 112.8h3.0M1772.0 112.8h7.0M1782.9 112.8h2.0M1797.5 112.8h5.0M1806.9 112.8h1.2M1808.1 112.8h4.0M1812.5 112.8h3.0M1817.1 112.8h7.0M1761.1 115.7h1.2M1779.3 115.7h5.0M1784.3 115.7h1.2M1761.1 118.5h4.0M1765.1 118.5h2.0M1777.9 118.5h3.0M1781.3 118.5h3.0M1784.3 118.5h5.0M1761.1 124.5h7.0M1769.0 124.5h9.0M1778.0 124.5h4.0M1782.4 124.5h2.0M1788.4 124.5h7.0M1795.8 124.5h9.0M1827.9 124.5h3.0M1761.1 127.5h3.0M1774.5 127.5h7.0M1782.4 127.5h4.0M1795.4 127.5h9.0M1804.4 127.5h7.0M1813.9 127.5h0.6M1761.1 130.4h9.0M1771.0 130.4h3.0M1783.0 130.4h2.0M1794.4 130.4h4.0M1806.4 130.4h4.0M1761.1 133.5h1.1M1772.3 136.5h2.2M1771.2 142.2h4.0M1777.6 142.2h6.7M1784.0 144.6h1.9M1771.2 147.4h9.0M1788.6 147.4h3.0M1801.0 147.4h5.0M1813.1 147.4h4.0M1838.8 147.4h1.2M1840.9 147.4h5.0M1846.3 147.4h1.7M1771.2 149.2h2.0M1773.2 149.2h2.0M1797.0 149.2h7.0M1816.0 149.2h5.0M1821.0 149.2h5.0M1831.4 149.2h2.0M1833.4 149.2h1.2M1834.6 149.2h2.0M1837.0 149.2h4.0M1852.9 149.2h1.2M1870.9 149.2h5.0M1875.9 149.2h1.5M1771.2 152.0h1.2M1773.3 152.0h2.0M1775.3 152.0h1.2M1776.5 152.0h9.0M1785.9 152.0h7.0M1794.9 152.0h9.0M1817.5 152.0h1.2M1771.2 155.2h2.0M1774.4 155.2h3.0M1798.1 155.2h1.2M1811.6 155.2h4.0M1817.2 155.2h4.0M1826.6 155.2h3.0M1830.5 155.2h5.0M1840.4 155.2h7.0M1857.6 155.2h7.0M1869.0 155.2h8.4M1771.2 157.2h1.2M1796.7 157.2h4.0M1801.6 157.2h4.0M1846.0 157.2h1.2M1847.2 157.2h4.1M1772.1 159.0h1.2M1782.8 159.0h1.2M1800.9 159.0h1.2M1851.6 159.0h9.0M1771.2 163.1h3.0M1792.6 163.1h5.0M1813.8 163.1h9.0M1822.8 163.1h3.0M1841.1 163.1h2.0M1771.2 165.1h7.0M1778.6 165.1h3.0M1835.9 165.1h2.0M1849.8 165.1h5.0M1870.8 165.1h3.0M1874.2 165.1h4.8M1771.2 167.0h1.2M1772.4 167.0h7.0M1786.4 167.0h7.0M1817.0 167.0h7.0M1771.2 169.1h5.0M1776.6 169.1h7.0M1787.6 169.1h2.0M1790.5 169.1h7.0M1807.8 169.1h7.0M1815.2 169.1h7.0M1764.7 174.9h4.0M1792.5 174.9h4.0M1797.4 174.9h1.2M1764.7 177.0h9.0M1773.7 177.0h7.0M1790.1 177.0h4.0M1795.0 177.0h1.6M1774.0 178.9h5.0M1779.0 178.9h2.0M1769.4 183.0h1.2M1770.6 183.0h1.2M1810.6 185.2h3.1M1787.0 188.7h7.0M1810.3 190.9h7.0M1824.2 190.9h1.2M1826.3 190.9h2.0M1851.5 190.9h5.0M1785.9 192.8h2.0M1788.3 192.8h5.0M1793.3 192.8h4.0M1785.2 197.2h9.0M1803.6 197.2h5.0M1819.4 197.2h5.0M1841.3 197.2h3.0M1847.7 197.2h1.2M1848.9 197.2h7.0M1808.6 199.4h5.0M1794.6 201.3h2.0M1819.0 201.3h9.0M1833.9 201.3h2.0M1841.8 201.3h1.2M1861.2 201.3h1.5M1813.8 205.1h5.0M1813.8 209.2h5.0M1828.6 209.2h9.0M1837.6 209.2h5.0M1853.0 209.2h2.0M1803.8 211.3h7.0M1812.8 211.3h1.2M1814.9 211.3h3.7M1810.9 214.9h1.2M1813.0 214.9h2.0M1833.3 214.9h9.0M1880.7 214.9h5.0M1807.2 216.8h7.0M1848.1 216.8h7.0M1808.1 219.0h4.0M1816.5 219.0h1.2M1837.2 219.0h4.3M1834.5 220.9h2.0M1807.2 222.7h3.0M1822.6 222.7h4.0M1828.6 222.7h1.2M1835.1 222.7h5.0M1844.4 222.7h2.0M1807.1 224.7h7.0M1820.4 224.7h7.0M1868.7 224.7h3.0M1837.6 226.3h3.0M1857.3 226.3h1.2M1867.5 226.3h5.0M1888.4 226.3h7.0M1809.1 228.3h2.0M1816.1 228.3h2.0M1819.0 228.3h2.9M1824.7 230.4h9.0M1841.4 230.4h2.0M1804.6 234.2h2.0M1810.4 236.1h9.0M1817.6 237.8h3.0M1820.6 237.8h3.0M1828.7 237.8h3.0M1827.9 239.9h9.0M1842.8 239.9h5.0M1868.5 239.9h2.0M1881.3 239.9h1.2M1832.3 242.7h1.2M1838.2 240.8h7.0M1853.1 240.8h5.0M1863.4 240.8h5.0M1870.5 240.8h4.0M1886.2 240.8h5.0M1896.2 240.8h5.0M1808.0 242.9h5.0M1813.0 242.9h3.0M1823.2 242.9h1.2M1825.3 242.9h1.2M1826.5 242.9h1.9M1821.8 244.9h3.0M1895.1 244.9h7.7M1808.0 247.0h4.0M1812.0 247.0h1.2M1813.6 247.0h7.0M1821.5 247.0h4.0M1817.6 249.0h5.0M1866.3 249.0h3.0M1808.0 251.1h4.0M1823.7 251.1h7.0M1817.0 253.1h5.0M1828.8 253.1h7.0M1845.2 253.1h7.0M1859.0 253.1h4.0M1869.9 253.1h7.0M1886.0 253.1h5.0M1808.0 255.0h1.2M1808.3 408.5h2.0M1826.8 410.1h2.0M1828.8 410.1h4.0M1807.2 412.3h3.0M1814.6 412.3h1.2M1816.2 412.3h5.0M1859.2 412.3h4.0M1875.0 412.3h9.0M1804.1 416.3h2.0M1814.4 416.3h4.0M1840.3 416.3h1.2M1867.2 416.3h5.0M1821.8 418.3h4.0M1843.2 418.3h5.0M1864.1 418.3h4.0M1803.9 420.4h3.0M1806.9 420.4h9.0M1819.9 420.4h9.0M1838.8 420.4h4.0M1843.7 420.4h4.0M1858.5 420.4h5.0M1863.9 420.4h2.0M1866.3 420.4h9.0M1803.9 422.9h7.0M1814.3 422.9h3.0M1817.7 422.9h4.0M1825.7 422.9h5.0M1837.5 422.9h4.0M1792.0 438.7h7.0M1821.4 438.7h1.2M1809.0 440.8h1.2M1851.8 440.8h7.0M1800.0 442.8h1.2M1807.0 442.8h5.0M1812.4 442.8h4.0M1838.6 442.8h5.0M1882.6 442.8h4.0M1886.6 442.8h3.0M1788.4 444.9h3.0M1795.4 444.9h4.0M1799.4 444.9h4.0M1805.5 444.9h0.9M1802.2 446.9h1.2M1898.9 446.9h3.1M1846.7 448.9h1.2M1859.0 448.9h2.0M1878.3 448.9h9.0M1894.7 448.9h7.2M1814.9 450.8h3.0M1818.8 450.8h3.0M1821.8 450.8h5.0M1885.5 450.8h4.0M1889.5 450.8h1.2M1893.7 450.8h1.2M1899.7 450.8h1.2M1796.4 452.8h3.0M1829.8 452.8h2.0M1844.3 452.8h1.2M1806.2 454.7h9.0M1854.5 456.7h1.2M1862.7 456.7h4.0M1874.1 456.7h9.0M1785.9 458.5h9.0M1805.1 458.5h0.6M1776.0 465.4h1.8M1811.5 469.0h2.3M1786.6 472.7h2.0M1789.2 474.8h4.0M1798.2 474.8h4.0M1802.2 474.8h3.0M1818.0 474.8h3.0M1868.6 474.8h5.0M1880.7 474.8h5.0M1787.5 476.8h7.0M1794.5 476.8h4.0M1817.6 476.8h4.0M1805.9 478.8h2.0M1825.3 478.8h7.0M1843.2 478.8h4.0M1848.1 478.8h1.2M1850.9 478.8h3.0M1860.2 478.8h2.0M1862.2 478.8h2.0M1864.2 478.8h4.0M1849.2 480.9h3.0M1781.3 483.0h1.4M1791.4 486.6h4.0M1823.4 492.6h3.0M1830.2 492.6h5.0M1835.2 492.6h9.0M1844.2 492.6h2.0M1863.1 492.6h5.0M1795.1 494.8h4.0M1822.0 494.8h1.2M1837.2 494.8h1.2M1840.4 494.8h4.0M1813.2 496.7h4.0M1822.0 498.9h2.0M1824.9 498.9h1.2M1793.3 519.3h2.0M1796.2 519.3h1.2M1767.2 579.3h2.0M1769.2 579.3h7.0M1774.6 581.2h3.0M1778.0 581.2h7.0M1785.9 581.2h9.0M1794.9 581.2h5.0M1804.3 581.2h9.0M1820.7 581.2h9.0M1832.6 581.2h3.0M1836.5 581.2h3.4M1770.1 583.2h2.0M1772.5 583.2h2.8M1761.1 585.3h0.7M1761.1 589.1h2.0M1780.7 594.6h1.2M1761.1 596.3h4.4M1761.1 600.8h4.0M1768.5 600.8h5.0M1777.4 600.8h7.0M1797.3 600.8h2.0M1761.1 602.8h9.0M1775.9 602.8h2.7M1761.1 604.4h1.2M1763.2 604.4h1.2M1761.1 606.1h5.0M1761.1 608.2h4.4M1761.1 613.1h4.0M1765.5 613.1h3.0M1777.9 613.1h5.0M1790.3 613.1h3.0M1794.2 613.1h7.0M1816.9 613.1h1.2M1818.1 613.1h9.0M1828.7 613.1h4.0M1788.3 616.9h1.2M1761.1 618.5h0.7M1764.7 620.8h9.0M1774.6 620.8h7.0M1798.5 620.8h3.0M1768.7 624.9h1.2M1770.8 624.9h9.0M1780.2 624.9h1.2M1770.1 626.7h5.0M1782.2 626.7h5.0M1788.1 626.7h7.0M1795.5 626.7h1.2M1799.1 626.7h3.0M1770.6 631.1h3.0M1774.8 631.1h4.0M1778.8 631.1h7.0M1788.2 631.1h4.0M1773.2 633.0h5.0M1787.2 633.0h7.7M1764.7 636.8h4.0M1769.1 636.8h4.0M1773.5 636.8h2.0M1782.9 640.9h4.0M1787.8 640.9h1.2M1764.7 642.5h0.8M1791.1 645.0h5.0M1768.0 658.9h4.9M1764.7 661.0h0.8M1761.1 662.9h0.7M1764.1 667.0h7.0M1771.1 667.0h1.2M1772.3 667.0h7.9M1761.1 670.8h1.1M1764.0 674.9h7.0M1777.1 674.9h6.4M1797.3 682.9h1.7M1793.3 684.5h2.0M1795.3 684.5h4.0M1799.3 684.5h2.0M1811.2 684.5h0.9M1795.0 686.1h7.0M1814.0 686.1h3.8M1795.0 687.9h7.0M1814.0 687.9h3.8M1795.0 689.7h7.0M1814.0 689.7h3.8M1795.0 691.5h7.0M1814.0 691.5h3.8M1795.0 693.3h7.0M1814.0 693.3h3.8M1795.0 695.1h7.0M1814.0 695.1h3.8M1793.3 702.5h4.0M1811.7 702.5h0.6M1795.0 704.1h7.0M1814.0 704.1h3.8M1795.0 705.9h7.0M1814.0 705.9h3.8M1795.0 707.7h7.0M1814.0 707.7h3.8M1795.0 709.5h7.0M1814.0 709.5h3.8M1795.0 711.3h7.0M1814.0 711.3h3.8M1795.0 713.1h7.0M1814.0 713.1h3.8M1790.2 714.9h2.3M1793.3 717.7h7.0M1790.0 719.6h1.2M1795.1 719.6h7.0M1811.6 719.6h0.6M1790.0 721.4h5.0M1790.0 723.2h7.0M1794.0 725.2h2.0M1822.3 725.2h7.0M1829.7 725.2h1.2M1846.4 725.2h4.0M1852.4 725.2h9.0M1795.7 727.2h5.0M1802.3 729.0h4.0M1790.0 720.8h1.2M1792.1 720.8h2.0M1799.9 720.8h3.0M1802.9 720.8h2.0M1804.9 720.8h9.0M1790.0 722.9h4.0M1799.8 722.9h5.7M1797.0 724.9h2.0M1799.0 724.9h3.0M1802.0 724.9h3.0M1805.9 724.9h1.2M1809.2 724.9h1.2M1810.8 724.9h7.0M1817.8 724.9h3.0M1821.2 724.9h1.2M1826.9 724.9h1.2M1831.1 724.9h9.0M1847.6 724.9h5.0M1855.5 724.9h2.0M1812.4 729.0h1.2M1793.3 731.1h5.0M1798.3 731.1h7.0M1824.4 733.1h3.0M1834.4 733.1h5.0M1808.6 735.0h2.0M1810.6 735.0h5.0M1816.5 735.0h5.0M1830.9 735.0h1.2M1832.5 735.0h4.0M1836.5 735.0h2.6M1816.5 736.8h2.0M1818.5 736.8h3.0M1823.9 736.8h7.0M1831.3 736.8h7.0M1849.7 736.8h5.0M1885.1 736.8h9.0M1894.1 736.8h5.0M1793.3 738.8h1.2M1794.1 740.9h5.0M1801.5 740.9h0.8M1793.3 747.0h2.0M1816.1 747.0h3.0M1844.8 747.0h3.0M1857.7 747.0h1.2M1893.1 747.0h7.0M1798.7 749.1h3.0M1801.7 749.1h2.0M1805.7 749.1h3.0M1810.8 749.1h4.0M1846.9 749.1h3.0M1853.3 749.1h2.1M1805.3 753.0h4.0M1817.2 753.0h2.0M1796.6 754.8h1.2M1806.7 754.8h5.0M1823.1 754.8h4.0M1832.0 754.8h2.0M1847.5 754.8h1.2M1854.1 754.8h2.0M1856.5 754.8h7.1M1845.0 759.2h9.0M1869.2 759.2h5.0M1899.3 759.2h1.2M1797.4 761.2h9.0M1808.4 761.2h2.1M1791.9 764.9h1.4M1791.9 768.7h4.0M1786.8 770.7h5.0M1791.8 770.7h4.0M1795.8 770.7h7.0M1808.2 770.7h7.0M1816.1 770.7h7.0M1828.1 770.7h4.0M1785.4 772.6h3.0M1774.6 778.8h0.8M1764.7 784.9h3.0M1784.1 784.9h3.0M1787.5 784.9h4.0M1778.4 791.1h7.0M1803.8 791.1h7.0M1814.8 791.1h1.4M1768.2 792.7h5.0M1795.6 792.7h9.0M1805.0 792.7h3.0M1810.9 792.7h3.0M1764.0 796.8h2.3M1761.1 798.9h4.4M1776.9 800.9h7.0M1784.8 800.9h2.0M1786.8 800.9h7.0M1793.8 800.9h0.6M1776.0 802.8h4.0M1780.0 802.8h3.0M1783.4 802.8h3.0M1786.4 802.8h2.0M1788.4 802.8h4.0M1792.4 802.8h0.9M1776.7 805.0h4.0M1780.7 805.0h1.2M1782.8 805.0h9.0M1792.2 805.0h3.6M1761.1 809.1h1.1M1828.5 265.2h13.8M1852.0 269.1h24.8M1848.5 271.1h13.8M1820.8 273.1h21.5M1845.4 275.1h14.6M1820.8 277.1h18.4M1852.6 279.1h15.4M1828.5 289.0h13.8M1854.0 292.9h24.8M1844.5 294.9h13.8M1820.8 296.9h21.5M1846.9 298.9h14.6M1820.8 300.9h18.4M1852.6 302.9h15.4M1828.5 312.8h13.8M1852.0 316.7h24.8M1848.5 318.7h13.8M1820.8 320.7h21.5M1841.4 322.7h14.6M1820.8 324.7h18.4M1854.6 326.7h15.4M1828.5 336.6h13.8M1856.0 340.6h24.8M1848.5 342.6h13.8M1820.8 344.6h21.5M1845.4 346.6h14.6M1820.8 348.6h18.4M1843.4 350.6h14.6M1820.8 352.6h18.4M1845.4 354.6h14.6M1820.8 356.6h18.4M1856.1 358.6h15.4M1828.5 368.5h13.8M1852.0 372.4h24.8M1850.0 374.4h13.8M1820.8 376.4h21.5M1841.4 378.4h14.6M1820.8 380.4h18.4M1854.6 382.4h15.4M1828.5 392.3h13.8M1857.5 396.2h24.8M1846.5 398.2h13.8M1820.8 400.2h21.5M1843.4 402.2h14.6M1820.8 404.2h18.4M1852.6 406.2h15.4M1761.1 521.3h9.0M1780.0 521.3h0.9M1763.8 527.4h0.9M1769.2 527.4h7.2M1788.1 527.4h2.7M1791.7 527.4h0.9M1764.7 529.4h8.1M1779.1 529.4h0.9M1764.7 531.4h7.2M1774.6 531.4h7.2M1789.9 531.4h1.8M1797.1 531.4h1.8M1767.4 533.5h0.9M1772.8 533.5h9.9M1783.6 533.5h0.9M1771.0 535.5h8.1M1784.5 535.5h0.9M1786.3 535.5h0.9M1771.9 537.5h4.5M1779.1 537.5h7.2M1794.4 537.5h1.8M1801.6 537.5h1.8M1771.9 539.6h6.3M1780.9 539.6h7.2M1796.2 539.6h1.8M1803.4 539.6h1.8M1771.9 541.6h4.5M1779.1 541.6h7.2M1794.4 541.6h1.8M1805.2 541.6h1.8M1774.6 545.7h0.9M1776.4 545.7h1.8M1783.6 545.7h6.3M1795.3 545.7h0.9M1805.2 545.7h6.3M1817.8 545.7h0.9M1827.7 545.7h6.3M1839.4 545.7h0.9M1849.3 545.7h6.3M1861.0 545.7h1.8M1866.4 545.7h7.2M1882.6 545.7h2.7M1886.2 545.7h0.9M1850.2 549.7h0.9M1775.5 551.8h8.1M1790.8 551.8h0.9M1771.9 553.8h0.9M1776.4 555.8h0.9M1778.2 559.9h0.9M1795.3 559.9h6.3M1802.5 559.9h9.0M1816.0 559.9h9.0M1825.9 559.9h0.9M1783.6 561.9h9.9M1798.0 561.9h8.1M1810.6 561.9h1.8M1775.5 563.9h0.9M1780.0 566.0h0.9M1867.3 568.0h0.9M1779.1 570.0h8.1M1794.4 570.0h0.9M1775.5 572.0h0.9M1771.9 574.1h0.9M1768.3 576.1h0.9M1764.7 578.1h0.9M1767.4 580.2h9.9M1839.4 582.2h0.9M1774.6 584.2h0.9M1761.1 586.3h0.9M1761.1 590.3h1.8M1761.1 594.4h0.9M1767.4 594.4h0.9M1776.4 594.4h0.9M1761.1 596.4h0.9M1770.1 596.4h0.9M1771.9 596.4h8.1M1784.5 596.4h0.9M1786.3 596.4h6.3M1798.9 596.4h0.9M1761.1 598.4h4.5M1761.1 602.5h12.6M1779.1 602.5h0.9M1784.5 602.5h0.9M1790.8 602.5h0.9M1796.2 602.5h0.9M1801.6 602.5h1.8M1761.1 604.5h9.9M1776.4 604.5h2.7M1761.1 606.6h3.6M1767.4 606.6h0.9" stroke="#e9e9e3" stroke-width="1.5" opacity="0.56" fill="none"/>
<path d="M1779.9 76.8h1.2M1783.5 76.8h5.0M1764.3 88.7h9.0M1787.1 88.7h4.0M1763.1 92.8h4.0M1772.0 92.8h9.0M1781.4 92.8h1.2M1783.0 92.8h1.2M1762.3 100.8h4.0M1785.2 100.8h7.0M1792.2 100.8h4.0M1796.2 100.8h1.2M1804.2 100.8h4.0M1793.1 103.8h9.0M1777.1 106.7h7.0M1793.7 106.7h2.0M1779.0 112.8h3.0M1784.9 112.8h2.0M1792.3 112.8h1.2M1793.5 112.8h4.0M1802.5 112.8h4.0M1815.5 112.8h1.2M1824.1 112.8h2.7M1763.2 115.7h1.2M1764.4 115.7h9.0M1773.4 115.7h5.0M1785.5 115.7h3.0M1793.8 115.7h4.0M1789.7 118.5h7.0M1797.6 118.5h2.0M1800.5 118.5h2.6M1784.4 124.5h4.0M1804.8 124.5h4.0M1809.2 124.5h2.0M1820.0 124.5h7.0M1764.1 127.5h7.0M1786.4 127.5h9.0M1774.0 130.4h9.0M1785.4 130.4h9.0M1798.4 130.4h4.0M1802.4 130.4h4.0M1764.8 136.5h2.0M1767.7 136.5h1.2M1765.0 139.4h5.0M1774.1 144.6h9.0M1785.6 147.4h3.0M1792.0 147.4h5.0M1808.1 147.4h5.0M1819.2 147.4h4.0M1823.6 147.4h2.0M1826.5 147.4h2.0M1829.4 147.4h9.0M1775.6 149.2h3.0M1778.6 149.2h5.0M1804.9 149.2h1.2M1826.0 149.2h2.0M1841.9 149.2h9.0M1850.9 149.2h2.0M1854.5 149.2h9.0M1792.9 152.0h2.0M1804.3 152.0h4.0M1809.2 152.0h5.0M1818.7 152.0h2.0M1821.6 152.0h3.0M1788.7 155.2h9.0M1800.2 155.2h2.0M1802.6 155.2h9.0M1815.6 155.2h1.2M1824.2 155.2h2.0M1847.4 155.2h9.0M1865.0 155.2h4.0M1772.4 157.2h3.0M1784.7 157.2h7.0M1811.5 157.2h4.0M1820.3 157.2h5.0M1825.7 157.2h5.0M1831.6 157.2h7.0M1839.0 157.2h7.0M1803.0 159.0h4.0M1807.0 159.0h9.0M1816.4 159.0h5.0M1821.4 159.0h3.0M1824.4 159.0h7.0M1832.3 159.0h5.0M1844.2 159.0h2.0M1861.0 159.0h3.0M1864.0 159.0h7.0M1871.0 159.0h2.0M1873.0 159.0h7.0M1880.0 159.0h1.2M1881.6 159.0h4.0M1885.6 159.0h1.2M1888.4 159.0h4.6M1768.1 161.3h4.0M1772.1 161.3h3.0M1776.0 161.3h7.0M1783.0 161.3h9.0M1801.9 161.3h4.0M1784.6 163.1h4.0M1788.6 163.1h4.0M1804.4 163.1h9.0M1825.8 163.1h7.0M1833.7 163.1h7.0M1782.0 165.1h7.0M1793.8 165.1h4.0M1801.8 165.1h1.2M1803.4 165.1h1.2M1805.5 165.1h5.0M1817.9 165.1h9.0M1838.8 165.1h9.0M1855.2 165.1h1.2M1779.4 167.0h7.0M1803.7 167.0h9.0M1813.6 167.0h3.0M1835.9 167.0h4.0M1839.9 167.0h9.0M1783.6 169.1h4.0M1797.9 169.1h2.0M1800.8 169.1h5.0M1806.2 169.1h1.2M1822.2 169.1h1.2M1823.4 169.1h0.9M1762.1 171.3h2.0M1764.1 171.3h2.2M1768.7 174.9h9.0M1778.6 174.9h9.0M1788.5 174.9h4.0M1798.6 174.9h0.6M1780.7 177.0h9.0M1781.0 178.9h1.2M1782.2 178.9h9.0M1791.2 178.9h3.0M1801.9 178.9h4.0M1815.8 178.9h2.0M1818.7 178.9h5.0M1823.7 178.9h9.0M1833.1 178.9h3.0M1836.1 178.9h3.8M1772.7 183.0h7.0M1779.7 183.0h3.0M1778.9 185.2h2.0M1793.9 185.2h5.0M1799.3 185.2h7.0M1783.3 187.1h3.0M1786.7 187.1h5.0M1782.0 188.7h5.0M1794.0 188.7h2.0M1804.0 188.7h1.2M1805.2 188.7h2.0M1816.0 188.7h4.2M1785.1 190.9h4.0M1790.0 190.9h5.0M1817.3 190.9h3.0M1820.3 190.9h3.0M1828.7 190.9h9.0M1846.1 190.9h5.0M1866.5 190.9h5.0M1871.5 190.9h9.0M1880.5 190.9h2.0M1883.4 190.9h7.0M1892.4 190.9h3.0M1794.6 197.2h9.0M1808.6 197.2h4.0M1824.4 197.2h2.0M1827.3 197.2h4.0M1831.3 197.2h5.0M1836.3 197.2h5.0M1844.3 197.2h3.0M1855.9 197.2h4.0M1859.9 197.2h4.0M1794.2 199.4h9.0M1803.2 199.4h5.0M1825.4 199.4h3.0M1791.7 201.3h2.0M1797.5 201.3h1.2M1803.7 201.3h5.0M1836.8 201.3h5.0M1845.1 201.3h1.2M1846.3 201.3h7.0M1853.3 201.3h3.0M1788.4 203.3h1.2M1789.0 205.1h2.0M1800.4 205.1h2.0M1802.8 205.1h4.0M1820.8 205.1h1.9M1788.0 207.2h2.8M1793.6 209.2h1.2M1794.8 209.2h9.0M1810.8 209.2h3.0M1819.2 209.2h9.0M1845.6 209.2h7.0M1855.0 209.2h4.0M1859.9 209.2h2.0M1799.4 211.3h2.0M1801.4 211.3h2.0M1798.4 213.3h0.6M1800.9 214.9h5.0M1830.3 214.9h3.0M1843.2 214.9h3.0M1851.2 214.9h5.0M1856.2 214.9h3.0M1859.2 214.9h5.0M1865.1 214.9h5.0M1879.5 214.9h1.2M1885.7 214.9h5.0M1890.7 214.9h3.0M1835.1 216.8h4.0M1839.1 216.8h2.0M1842.0 216.8h1.2M1844.1 216.8h4.0M1859.1 216.8h2.0M1803.1 219.0h5.0M1812.5 219.0h4.0M1817.7 219.0h3.0M1825.7 219.0h4.0M1829.7 219.0h2.0M1835.1 219.0h1.2M1811.3 220.9h9.0M1825.2 220.9h2.0M1827.6 220.9h2.0M1829.6 220.9h4.0M1837.4 220.9h9.0M1847.3 220.9h4.0M1851.3 220.9h9.0M1860.3 220.9h5.0M1866.2 220.9h1.2M1867.8 220.9h3.0M1870.8 220.9h5.0M1876.2 220.9h5.0M1881.2 220.9h3.0M1884.6 220.9h1.2M1895.2 220.9h1.2M1897.3 220.9h1.4M1819.6 222.7h3.0M1830.2 222.7h4.0M1840.5 222.7h3.0M1846.8 222.7h5.0M1852.7 222.7h1.9M1802.1 224.7h3.0M1805.1 224.7h2.0M1815.0 224.7h5.0M1827.4 224.7h9.0M1836.8 224.7h7.0M1848.7 224.7h1.2M1850.8 224.7h1.2M1852.9 224.7h3.0M1856.8 224.7h7.0M1866.7 224.7h2.0M1871.7 224.7h5.0M1813.8 226.3h4.0M1820.3 226.3h3.0M1833.0 226.3h3.0M1836.0 226.3h1.2M1844.0 226.3h7.0M1851.9 226.3h5.0M1858.5 226.3h9.0M1873.4 226.3h5.0M1878.4 226.3h3.0M1882.3 226.3h4.0M1895.8 226.3h1.2M1801.7 228.3h5.0M1807.1 228.3h2.0M1811.1 228.3h5.0M1806.8 230.4h3.0M1812.8 230.4h7.0M1821.8 230.4h2.0M1834.1 230.4h3.0M1843.4 230.4h3.0M1851.4 230.4h1.2M1852.6 230.4h7.0M1859.6 230.4h9.0M1869.5 230.4h1.2M1871.6 230.4h9.0M1880.6 230.4h3.0M1897.2 230.4h2.0M1802.2 234.2h2.0M1806.6 234.2h1.2M1811.2 234.2h4.0M1820.1 234.2h1.2M1821.3 234.2h5.5M1806.4 236.1h4.0M1820.3 236.1h2.0M1822.3 236.1h3.0M1825.7 236.1h2.0M1828.6 236.1h9.0M1845.5 236.1h5.0M1850.5 236.1h2.4M1810.6 237.8h4.0M1824.5 237.8h3.0M1827.5 237.8h1.2M1832.1 237.8h5.0M1837.1 237.8h1.1M1811.5 239.9h2.0M1816.4 239.9h9.0M1826.3 239.9h1.2M1837.8 239.9h5.0M1848.2 239.9h3.0M1851.6 239.9h9.0M1870.5 239.9h7.0M1877.9 239.9h3.0M1884.6 239.9h1.1M1820.4 242.7h4.0M1824.4 242.7h4.0M1833.5 242.7h2.0M1836.4 242.7h7.0M1843.8 242.7h9.0M1853.7 242.7h3.0M1858.7 242.7h5.0M1864.1 242.7h3.0M1867.1 242.7h2.0M1869.1 242.7h5.0M1874.1 242.7h2.0M1876.1 242.7h2.0M1878.5 242.7h3.0M1882.4 242.7h1.2M1884.5 242.7h5.0M1890.4 242.7h1.2M1892.8 242.7h3.0M1895.8 242.7h5.0M1814.4 240.8h9.0M1823.4 240.8h7.0M1833.2 240.8h5.0M1846.1 240.8h7.0M1880.3 240.8h5.0M1902.1 240.8h0.7M1816.9 242.9h3.0M1820.3 242.9h2.0M1809.4 244.9h3.0M1812.4 244.9h9.0M1825.2 244.9h4.0M1829.2 244.9h9.0M1838.2 244.9h4.0M1842.2 244.9h1.2M1854.2 244.9h2.0M1857.1 244.9h9.0M1866.1 244.9h9.0M1875.5 244.9h2.0M1879.5 244.9h9.0M1888.9 244.9h1.2M1890.1 244.9h5.0M1825.9 247.0h0.9M1814.4 249.0h1.2M1816.0 249.0h1.2M1823.0 249.0h3.0M1834.6 249.0h9.0M1844.5 249.0h2.0M1846.5 249.0h7.0M1858.3 249.0h3.0M1861.3 249.0h5.0M1870.2 249.0h2.0M1872.2 249.0h3.0M1875.6 249.0h9.0M1888.4 249.0h4.0M1893.3 249.0h5.0M1899.2 249.0h3.6M1816.3 251.1h7.0M1830.7 251.1h1.0M1811.4 253.1h4.0M1827.6 253.1h1.2M1852.2 253.1h4.0M1856.6 253.1h2.0M1863.0 253.1h2.0M1876.9 253.1h1.2M1879.0 253.1h7.0M1891.0 253.1h4.0M1895.0 253.1h5.0M1816.6 255.0h7.0M1823.6 255.0h4.0M1827.6 255.0h0.8M1804.9 257.2h3.0M1801.7 406.5h4.7M1805.3 408.5h3.0M1804.9 410.1h5.0M1809.9 410.1h5.0M1836.8 410.1h2.0M1846.7 410.1h2.0M1848.7 410.1h4.0M1810.2 412.3h4.0M1822.1 412.3h3.0M1837.1 412.3h4.0M1848.9 412.3h2.0M1850.9 412.3h4.0M1855.8 412.3h3.0M1869.1 412.3h5.0M1884.0 412.3h3.3M1807.0 416.3h7.0M1820.0 416.3h2.0M1822.4 416.3h9.0M1836.4 416.3h3.0M1843.1 416.3h2.0M1862.8 416.3h4.0M1872.2 416.3h1.2M1873.4 416.3h9.0M1882.8 416.3h1.2M1805.8 418.3h7.0M1812.8 418.3h9.0M1825.8 418.3h5.0M1858.1 418.3h4.0M1873.0 418.3h7.0M1880.0 418.3h4.0M1884.0 418.3h9.0M1900.4 418.3h1.5M1815.9 420.4h4.0M1828.9 420.4h9.0M1848.6 420.4h4.0M1853.5 420.4h5.0M1888.5 420.4h4.0M1892.9 420.4h0.9M1811.3 422.9h3.0M1831.6 422.9h5.0M1843.5 422.9h7.0M1850.5 422.9h1.2M1851.7 422.9h2.9M1799.8 424.5h0.9M1794.8 426.1h1.8M1791.5 427.8h1.8M1785.2 431.0h0.8M1782.3 432.7h0.6M1788.6 434.6h3.0M1792.0 434.6h9.0M1801.0 434.6h9.0M1819.0 434.6h3.7M1788.0 436.8h1.2M1804.8 438.7h2.0M1816.0 438.7h2.0M1822.6 438.7h2.0M1825.5 438.7h2.9M1792.0 440.8h5.0M1797.0 440.8h7.0M1804.9 440.8h2.0M1812.6 440.8h3.0M1815.6 440.8h7.0M1827.6 440.8h9.0M1836.6 440.8h5.0M1842.0 440.8h2.0M1844.0 440.8h1.2M1848.6 440.8h1.2M1858.8 440.8h1.2M1860.0 440.8h9.0M1869.9 440.8h2.6M1787.6 442.8h3.0M1790.6 442.8h9.0M1816.4 442.8h4.0M1820.4 442.8h2.0M1822.8 442.8h4.0M1836.2 442.8h2.0M1849.0 442.8h2.0M1851.0 442.8h1.2M1859.6 442.8h7.0M1866.6 442.8h5.0M1878.6 442.8h4.0M1891.2 442.8h9.0M1791.4 444.9h4.0M1804.3 444.9h1.2M1838.3 446.9h4.0M1843.2 446.9h9.0M1855.2 446.9h2.0M1857.2 446.9h1.2M1862.4 446.9h4.0M1866.4 446.9h3.0M1869.4 446.9h3.0M1792.9 448.9h5.0M1815.3 448.9h4.0M1847.9 448.9h2.0M1794.5 450.8h9.0M1803.9 450.8h4.0M1826.8 450.8h7.0M1834.7 450.8h9.0M1844.6 450.8h9.0M1880.1 450.8h5.0M1895.3 450.8h4.0M1800.3 452.8h2.0M1811.3 452.8h1.2M1813.4 452.8h4.0M1817.8 452.8h5.0M1827.8 452.8h2.0M1832.2 452.8h3.0M1835.2 452.8h4.0M1841.3 452.8h3.0M1863.5 452.8h2.0M1866.4 452.8h4.0M1871.3 452.8h1.2M1888.2 452.8h3.0M1891.2 452.8h9.0M1791.9 454.7h7.0M1798.9 454.7h4.0M1803.3 454.7h2.0M1820.1 454.7h7.0M1845.7 454.7h5.0M1850.7 454.7h9.0M1860.1 454.7h9.0M1869.5 454.7h1.2M1870.7 454.7h9.0M1880.1 454.7h2.0M1882.1 454.7h4.0M1886.1 454.7h9.0M1791.3 456.7h3.0M1795.9 456.7h9.0M1826.5 456.7h9.0M1835.5 456.7h1.2M1845.5 456.7h9.0M1866.7 456.7h3.0M1870.1 456.7h4.0M1894.9 456.7h7.0M1797.7 458.5h7.0M1783.5 462.1h0.8M1779.4 469.0h3.0M1804.4 469.0h1.2M1805.6 469.0h5.0M1782.5 471.1h5.0M1787.5 471.1h1.7M1788.6 472.7h3.0M1792.0 472.7h0.6M1787.6 474.8h1.2M1793.2 474.8h3.0M1821.4 474.8h4.0M1825.4 474.8h3.0M1828.8 474.8h3.0M1838.8 474.8h5.0M1844.2 474.8h5.0M1859.5 474.8h7.0M1867.4 474.8h1.2M1873.6 474.8h1.2M1874.8 474.8h5.0M1887.7 474.8h5.0M1892.7 474.8h2.7M1809.4 476.8h1.2M1810.6 476.8h7.0M1827.0 476.8h1.2M1828.2 476.8h5.0M1833.2 476.8h9.0M1844.6 476.8h7.0M1854.0 476.8h9.0M1863.0 476.8h3.0M1866.0 476.8h9.0M1875.0 476.8h7.0M1882.9 476.8h7.0M1786.1 478.8h7.0M1801.9 478.8h4.0M1811.3 478.8h7.0M1818.3 478.8h3.0M1821.3 478.8h4.0M1833.2 478.8h7.0M1841.1 478.8h1.2M1849.7 478.8h1.2M1854.3 478.8h5.0M1868.2 478.8h4.0M1873.1 478.8h7.0M1885.1 478.8h2.0M1888.0 478.8h4.0M1892.9 478.8h2.5M1790.6 480.9h2.0M1792.6 480.9h5.0M1800.5 480.9h2.0M1809.9 480.9h5.0M1814.9 480.9h3.0M1817.9 480.9h4.0M1822.8 480.9h2.0M1824.8 480.9h1.2M1826.9 480.9h4.0M1836.8 480.9h4.0M1841.7 480.9h3.0M1847.1 480.9h1.2M1852.6 480.9h7.0M1864.0 480.9h7.0M1871.0 480.9h3.0M1874.4 480.9h3.0M1884.4 480.9h7.0M1891.8 480.9h3.6M1785.2 485.0h9.0M1794.6 485.0h4.4M1795.8 486.6h2.0M1798.7 486.6h2.0M1808.6 486.6h3.0M1822.4 486.6h1.9M1794.7 488.7h6.0M1799.1 492.6h9.0M1808.1 492.6h7.0M1816.0 492.6h7.0M1827.3 492.6h2.0M1846.2 492.6h7.0M1868.5 492.6h3.2M1799.5 494.8h7.0M1816.8 494.8h1.2M1818.0 494.8h4.0M1823.2 494.8h9.0M1832.2 494.8h5.0M1838.8 494.8h1.2M1844.4 494.8h3.6M1798.0 496.7h7.0M1805.9 496.7h2.0M1817.2 496.7h5.0M1822.2 496.7h5.0M1827.6 496.7h5.0M1842.0 496.7h1.2M1844.1 496.7h2.3M1798.5 498.9h7.0M1805.9 498.9h1.2M1807.1 498.9h7.0M1814.1 498.9h7.0M1826.1 498.9h9.0M1836.0 498.9h7.0M1793.5 501.0h3.0M1776.2 579.3h0.8M1800.3 581.2h4.0M1813.3 581.2h4.0M1817.7 581.2h3.0M1830.6 581.2h2.0M1763.5 592.7h1.2M1764.7 592.7h2.0M1766.7 592.7h9.0M1765.0 594.6h2.0M1767.0 594.6h2.0M1769.0 594.6h2.0M1771.9 594.6h4.0M1782.3 594.6h3.0M1765.1 600.8h3.0M1791.4 600.8h5.0M1799.3 600.8h3.0M1802.3 600.8h0.8M1770.5 602.8h3.0M1764.4 604.4h1.9M1767.0 606.1h2.6M1773.9 613.1h2.0M1786.9 613.1h3.0M1802.1 613.1h2.0M1827.5 613.1h1.2M1764.5 616.9h1.2M1767.8 616.9h1.2M1776.4 616.9h4.0M1780.4 616.9h4.0M1784.4 616.9h3.0M1789.5 616.9h3.8M1782.5 620.8h9.0M1791.5 620.8h7.0M1789.2 624.9h4.0M1793.2 624.9h0.9M1777.2 626.7h5.0M1797.1 626.7h2.0M1773.6 631.1h1.2M1785.8 631.1h2.0M1792.6 631.1h1.2M1768.6 633.0h1.2M1778.2 633.0h9.0M1769.7 640.9h1.2M1771.3 640.9h3.0M1777.3 640.9h1.2M1789.4 640.9h4.0M1769.4 645.0h5.0M1775.3 645.0h1.2M1776.5 645.0h1.2M1778.1 645.0h2.0M1782.2 645.0h5.0M1787.2 645.0h3.0M1796.1 645.0h1.2M1768.0 650.7h9.0M1777.4 650.7h5.0M1783.3 650.7h9.0M1792.3 650.7h7.0M1799.7 650.7h4.0M1803.7 650.7h9.0M1812.7 650.7h5.0M1818.6 650.7h2.0M1821.5 650.7h1.2M1822.7 650.7h5.0M1828.1 650.7h2.0M1831.0 650.7h1.2M1832.6 650.7h9.0M1842.5 650.7h1.2M1844.1 650.7h2.0M1847.0 650.7h7.0M1854.4 650.7h1.2M1856.5 650.7h0.6M1768.0 652.6h7.0M1775.0 652.6h5.0M1780.0 652.6h1.2M1782.1 652.6h4.0M1786.1 652.6h3.0M1789.1 652.6h1.2M1791.2 652.6h4.0M1795.2 652.6h9.0M1805.1 652.6h2.0M1807.5 652.6h5.0M1812.5 652.6h2.0M1814.9 652.6h4.0M1819.8 652.6h5.0M1825.7 652.6h5.0M1831.6 652.6h2.0M1834.0 652.6h1.2M1835.2 652.6h7.0M1842.2 652.6h1.0M1768.0 654.8h7.0M1771.0 674.9h2.0M1773.0 674.9h2.0M1762.1 676.8h1.2M1790.3 679.0h4.7M1794.4 682.9h2.0M1809.0 686.1h5.0M1809.0 687.9h5.0M1809.0 689.7h5.0M1809.0 691.5h5.0M1809.0 693.3h5.0M1809.0 695.1h5.0M1789.3 698.1h3.0M1788.2 699.7h3.5M1794.4 700.8h4.6M1809.0 704.1h5.0M1809.0 705.9h5.0M1809.0 707.7h5.0M1809.0 709.5h5.0M1809.0 711.3h5.0M1809.0 713.1h5.0M1800.3 717.7h2.8M1792.1 719.6h3.0M1802.5 719.6h7.0M1800.4 721.4h2.0M1802.4 721.4h5.0M1808.3 721.4h7.0M1797.4 723.2h1.2M1802.0 723.2h3.5M1805.0 725.2h5.0M1810.9 725.2h2.0M1813.3 725.2h5.0M1818.3 725.2h4.0M1830.9 725.2h3.0M1837.8 725.2h7.0M1861.4 725.2h0.6M1788.7 727.2h7.0M1791.4 729.0h7.0M1806.7 729.0h9.0M1816.1 729.0h3.0M1820.0 729.0h3.0M1823.0 729.0h1.2M1794.5 720.8h5.0M1794.4 722.9h5.0M1808.0 724.9h1.2M1825.3 724.9h1.2M1829.0 724.9h1.2M1840.1 724.9h5.0M1853.5 724.9h2.0M1858.4 724.9h3.5M1792.2 727.0h5.0M1793.5 729.0h2.0M1796.4 729.0h5.0M1801.4 729.0h2.0M1804.3 729.0h1.2M1806.4 729.0h4.0M1810.4 729.0h2.0M1821.0 729.0h5.0M1826.9 729.0h2.0M1806.2 731.1h2.0M1808.2 731.1h2.3M1797.7 733.1h4.0M1801.7 733.1h3.0M1815.0 733.1h9.0M1839.4 733.1h3.0M1842.4 733.1h9.0M1852.3 733.1h9.0M1861.3 733.1h9.0M1871.2 733.1h5.0M1876.2 733.1h9.0M1886.1 733.1h9.0M1896.0 733.1h4.3M1801.6 735.0h7.0M1794.3 736.8h5.0M1809.2 736.8h4.0M1813.2 736.8h1.2M1821.9 736.8h2.0M1844.7 736.8h5.0M1860.7 736.8h9.0M1869.7 736.8h2.0M1873.7 736.8h9.0M1883.1 736.8h2.0M1899.1 736.8h2.9M1799.5 740.9h2.0M1792.5 743.2h2.4M1800.1 745.0h3.0M1807.0 745.0h3.0M1816.8 745.0h4.0M1820.8 745.0h7.0M1828.2 745.0h1.8M1819.5 747.0h5.0M1824.5 747.0h3.0M1827.9 747.0h9.0M1848.7 747.0h5.0M1853.7 747.0h4.0M1864.3 747.0h9.0M1888.2 747.0h4.0M1815.7 749.1h2.0M1818.1 749.1h4.0M1796.7 751.0h0.7M1800.9 753.0h4.0M1819.6 753.0h3.0M1823.5 753.0h7.0M1831.4 753.0h7.0M1843.7 753.0h4.0M1848.6 753.0h5.0M1854.5 753.0h5.0M1859.5 753.0h7.0M1866.5 753.0h3.0M1869.5 753.0h5.0M1876.1 753.0h4.0M1881.0 753.0h1.2M1797.8 754.8h4.0M1818.7 754.8h4.0M1828.0 754.8h4.0M1834.9 754.8h9.0M1849.1 754.8h5.0M1799.7 759.2h9.0M1808.7 759.2h1.2M1822.2 759.2h3.0M1855.2 759.2h9.0M1864.2 759.2h5.0M1874.6 759.2h3.0M1885.9 759.2h4.0M1890.3 759.2h1.2M1891.9 759.2h7.0M1900.9 759.2h1.9M1806.8 761.2h1.2M1796.3 768.7h9.0M1806.2 768.7h5.0M1811.2 768.7h0.9M1802.8 770.7h5.0M1823.1 770.7h5.0M1789.3 772.6h2.4M1777.1 776.7h2.3M1769.2 782.9h0.6M1768.6 784.9h1.2M1779.7 784.9h4.0M1792.4 784.9h3.0M1795.4 784.9h2.8M1767.8 791.1h9.0M1776.8 791.1h1.2M1790.4 791.1h9.0M1799.4 791.1h4.0M1810.8 791.1h4.0M1773.2 792.7h5.0M1783.6 792.7h7.0M1790.6 792.7h3.0M1808.9 792.7h2.0M1817.2 792.7h1.4M1818.0 263.2h9.7M1810.8 265.2h15.4M1845.3 265.2h6.2M1812.0 267.1h29.5M1815.4 271.1h26.9M1863.0 271.1h11.6M1877.0 271.1h20.7M1811.5 273.1h7.7M1815.4 275.1h24.6M1860.8 275.1h12.2M1874.6 275.1h16.9M1811.5 277.1h7.7M1815.4 279.1h36.1M1869.5 279.1h10.8M1881.8 279.1h18.5M1813.0 281.0h4.0M1826.0 281.0h33.0M1818.0 287.0h9.7M1810.8 289.0h15.4M1845.3 289.0h6.2M1812.0 290.9h29.5M1815.4 294.9h26.9M1859.0 294.9h11.6M1873.0 294.9h20.7M1811.5 296.9h7.7M1815.4 298.9h24.6M1862.3 298.9h12.2M1876.1 298.9h16.9M1811.5 300.9h7.7M1815.4 302.9h36.1M1869.5 302.9h10.8M1881.8 302.9h18.5M1813.0 304.8h4.0M1826.0 304.8h33.0M1818.0 310.8h9.7M1810.8 312.8h15.4M1843.8 312.8h6.2M1812.0 314.8h29.5M1815.4 318.7h26.9M1863.0 318.7h11.6M1877.0 318.7h20.7M1811.5 320.7h7.7M1815.4 322.7h24.6M1856.8 322.7h12.2M1870.6 322.7h16.9M1811.5 324.7h7.7M1815.4 326.7h36.1M1871.5 326.7h10.8M1883.8 326.7h18.5M1813.0 328.6h4.0M1826.0 328.6h33.0M1818.0 334.6h9.7M1810.8 336.6h15.4M1839.8 336.6h6.2M1812.0 338.6h29.5M1815.4 342.6h26.9M1863.0 342.6h11.6M1877.0 342.6h20.7M1811.5 344.6h7.7M1815.4 346.6h24.6M1860.8 346.6h12.2M1874.6 346.6h16.9M1811.5 348.6h7.7M1815.4 350.6h24.6M1858.8 350.6h12.2M1872.6 350.6h16.9M1811.5 352.6h7.7M1815.4 354.6h24.6M1860.8 354.6h12.2M1874.6 354.6h16.9M1811.5 356.6h7.7M1815.4 358.6h36.1M1873.0 358.6h10.8M1885.3 358.6h18.2M1813.0 360.6h4.0M1826.0 360.6h33.0M1818.0 366.5h9.7M1810.8 368.5h15.4M1843.8 368.5h6.2M1812.0 370.4h29.5M1815.4 374.4h26.9M1864.5 374.4h11.6M1878.5 374.4h20.7M1811.5 376.4h7.7M1815.4 378.4h24.6M1856.8 378.4h12.2M1870.6 378.4h16.9M1811.5 380.4h7.7M1815.4 382.4h36.1M1871.5 382.4h10.8M1883.8 382.4h18.5M1813.0 384.3h4.0M1826.0 384.3h33.0M1818.0 390.3h9.7M1810.8 392.3h15.4M1841.8 392.3h6.2M1812.0 394.2h29.5M1815.4 398.2h26.9M1861.0 398.2h11.6M1875.0 398.2h20.7M1811.5 400.2h7.7M1815.4 402.2h24.6M1858.8 402.2h12.2M1872.6 402.2h16.9M1811.5 404.2h7.7M1815.4 406.2h36.1M1869.5 406.2h10.8M1881.8 406.2h18.5M1813.0 408.1h4.0M1826.0 408.1h33.0M1772.8 521.3h7.2M1776.4 527.4h11.7M1781.8 531.4h8.1M1791.7 531.4h5.4M1782.7 535.5h1.8M1786.3 537.5h8.1M1796.2 537.5h5.4M1788.1 539.6h8.1M1798.0 539.6h5.4M1786.3 541.6h8.1M1796.2 541.6h9.0M1790.8 545.7h4.5M1812.4 545.7h5.4M1834.9 545.7h4.5M1856.5 545.7h4.5M1780.0 547.7h4.5M1785.4 547.7h20.7M1807.0 547.7h1.8M1809.7 547.7h8.1M1818.7 547.7h0.9M1820.5 547.7h1.8M1823.2 547.7h5.4M1829.5 547.7h1.8M1832.2 547.7h2.7M1835.8 547.7h7.2M1843.9 547.7h1.8M1846.6 547.7h1.8M1849.3 547.7h12.6M1775.5 549.7h0.9M1777.3 549.7h1.8M1780.0 549.7h7.2M1788.1 549.7h7.2M1796.2 549.7h4.5M1801.6 549.7h4.5M1807.0 549.7h5.4M1813.3 549.7h4.5M1818.7 549.7h0.9M1820.5 549.7h1.8M1823.2 549.7h2.7M1826.8 549.7h1.8M1829.5 549.7h3.6M1834.0 549.7h16.2M1812.4 559.9h2.7M1794.4 561.9h2.7M1783.6 568.0h4.5M1789.0 568.0h21.6M1811.5 568.0h4.5M1816.9 568.0h4.5M1822.3 568.0h1.8M1825.0 568.0h4.5M1830.4 568.0h1.8M1833.1 568.0h7.2M1841.2 568.0h1.8M1843.9 568.0h3.6M1848.4 568.0h18.9M1772.8 582.2h4.5M1778.2 582.2h19.8M1798.9 582.2h5.4M1805.2 582.2h1.8M1807.9 582.2h1.8M1810.6 582.2h5.4M1816.9 582.2h22.5M1769.2 584.2h5.4M1768.3 594.4h8.1M1771.0 596.4h0.9M1798.0 596.4h0.9M1780.0 602.5h4.5M1785.4 602.5h5.4M1791.7 602.5h4.5M1797.1 602.5h4.5M1765.6 606.6h1.8" stroke="#d8ce6e" stroke-width="1.5" opacity="0.56" fill="none"/>
<path d="M1772.9 76.8h7.0M1789.4 76.8h5.5M1773.7 88.7h4.0M1799.0 100.8h4.0M1808.2 100.8h3.1M1775.7 103.8h1.2M1777.3 103.8h3.0M1781.2 103.8h2.0M1784.1 103.8h9.0M1796.1 106.7h4.0M1764.0 112.8h5.0M1787.3 112.8h5.0M1788.9 115.7h4.0M1802.8 115.7h1.1M1768.0 118.5h9.0M1771.5 127.5h3.0M1761.1 136.5h2.5M1769.3 136.5h3.0M1761.1 139.4h3.5M1770.4 139.4h4.0M1764.7 144.6h3.5M1783.6 149.2h4.0M1828.0 149.2h3.0M1815.1 152.0h2.0M1778.3 155.2h5.0M1783.3 155.2h5.0M1821.2 155.2h3.0M1856.4 155.2h1.2M1779.7 157.2h5.0M1791.7 157.2h5.0M1806.5 157.2h5.0M1764.7 159.0h3.5M1846.2 159.0h5.0M1764.7 161.3h2.5M1774.2 163.1h7.0M1798.5 163.1h5.0M1810.5 165.1h7.0M1826.9 165.1h9.0M1828.9 167.0h7.0M1761.1 171.3h1.0M1761.1 173.2h1.5M1763.5 173.2h1.2M1761.1 178.9h2.5M1763.6 178.9h3.0M1768.0 183.0h1.0M1774.5 185.2h3.5M1777.8 187.1h1.5M1781.0 188.7h1.0M1812.1 188.7h3.0M1782.7 190.9h1.5M1890.8 190.9h1.2M1899.4 190.9h2.0M1901.4 190.9h0.6M1782.7 197.2h2.5M1864.8 197.2h5.0M1785.9 199.4h2.5M1814.5 199.4h4.0M1818.5 199.4h3.0M1789.2 201.3h2.5M1798.7 201.3h5.0M1809.6 201.3h2.0M1843.0 201.3h1.2M1856.3 201.3h4.0M1785.9 203.3h2.5M1789.6 203.3h1.2M1782.7 205.1h2.5M1786.1 205.1h2.0M1791.4 205.1h9.0M1806.8 205.1h7.0M1818.8 205.1h2.0M1785.1 207.2h2.5M1789.2 209.2h3.5M1842.6 209.2h3.0M1792.5 211.3h2.5M1794.9 213.3h3.5M1797.4 214.9h3.5M1814.6 216.8h9.0M1824.0 216.8h9.0M1855.1 216.8h4.0M1800.7 219.0h1.5M1832.1 219.0h3.0M1803.9 220.9h2.5M1800.7 224.7h1.0M1863.8 224.7h2.0M1803.9 226.3h2.5M1806.8 226.3h7.0M1818.2 226.3h1.2M1800.7 228.3h1.0M1803.9 230.4h2.5M1803.9 232.4h1.5M1800.7 234.2h1.5M1816.1 234.2h4.0M1803.9 236.1h2.5M1807.2 237.8h2.5M1814.6 237.8h3.0M1810.5 239.9h1.0M1883.4 239.9h1.2M1808.0 242.7h2.5M1810.5 242.7h9.0M1829.3 242.7h3.0M1857.1 242.7h1.2M1891.6 242.7h1.2M1808.0 240.8h1.5M1891.2 240.8h5.0M1808.0 244.9h1.0M1877.9 244.9h1.2M1808.0 249.0h1.5M1885.5 249.0h2.0M1812.4 251.1h3.0M1808.0 253.1h2.5M1822.0 253.1h4.0M1809.2 255.0h7.0M1803.9 257.2h1.0M1800.7 406.5h1.0M1803.9 408.5h1.0M1803.9 410.1h1.0M1841.5 412.3h7.0M1800.7 416.3h2.5M1803.9 418.3h1.5M1838.2 418.3h5.0M1875.7 420.4h4.0M1880.6 420.4h4.0M1885.5 420.4h3.0M1821.7 422.9h4.0M1841.5 422.9h2.0M1797.4 424.5h1.5M1793.3 426.1h1.5M1790.0 427.8h1.5M1786.8 429.4h2.5M1782.7 431.0h2.5M1779.4 432.7h2.5M1785.1 434.6h3.5M1785.1 436.8h2.5M1785.1 438.7h3.5M1806.8 438.7h5.0M1811.8 438.7h3.0M1814.8 438.7h1.2M1785.1 440.8h1.5M1810.2 440.8h2.0M1785.1 442.8h2.5M1826.8 442.8h9.0M1844.0 442.8h5.0M1890.0 442.8h1.2M1787.7 446.9h2.0M1797.2 446.9h3.0M1814.4 446.9h9.0M1852.2 446.9h3.0M1879.7 446.9h3.0M1891.0 446.9h7.0M1836.7 448.9h7.0M1807.9 450.8h7.0M1862.0 450.8h1.2M1782.7 452.8h1.2M1785.9 454.7h1.2M1794.3 456.7h1.2M1815.2 456.7h3.0M1883.1 456.7h2.0M1795.3 458.5h2.0M1784.3 460.5h2.5M1786.8 460.5h0.8M1781.0 462.1h2.5M1777.8 463.7h2.5M1774.5 465.4h1.5M1772.1 467.0h2.5M1777.0 469.0h1.5M1779.4 471.1h1.0M1781.3 471.1h1.2M1782.7 472.7h3.5M1785.1 474.8h2.5M1849.6 474.8h9.0M1785.1 476.8h1.5M1822.0 476.8h5.0M1842.6 476.8h2.0M1785.1 478.8h1.0M1793.5 478.8h4.0M1808.3 478.8h3.0M1785.1 480.9h2.5M1797.6 480.9h2.0M1804.9 480.9h5.0M1779.4 483.0h1.0M1782.7 485.0h2.5M1785.9 486.6h3.5M1792.5 488.7h1.0M1794.1 492.6h1.0M1794.1 494.8h1.0M1794.1 496.7h3.5M1794.1 498.9h3.5M1790.0 501.0h3.5M1761.1 592.7h1.5M1761.1 594.6h3.5M1773.5 600.8h3.0M1773.5 602.8h2.0M1768.9 613.1h5.0M1782.9 613.1h4.0M1833.1 613.1h7.0M1761.1 616.9h2.5M1766.6 616.9h1.2M1769.8 633.0h3.0M1775.2 640.9h1.2M1778.5 640.9h4.0M1793.8 640.9h0.6M1768.0 645.0h1.0M1761.1 672.7h2.5M1761.1 674.9h2.5M1775.0 674.9h1.2M1761.1 676.8h1.0M1786.8 679.0h3.5M1782.7 680.9h1.0M1783.7 680.9h4.7M1790.0 682.9h3.5M1802.2 684.5h9.0M1790.0 686.1h4.0M1790.0 687.9h4.0M1790.0 689.7h4.0M1790.0 691.5h4.0M1790.0 693.3h4.0M1790.0 695.1h4.0M1786.8 698.1h2.5M1786.8 699.7h1.0M1790.0 700.8h3.5M1797.3 702.5h5.0M1802.3 702.5h9.0M1790.0 704.1h4.0M1790.0 705.9h4.0M1790.0 707.7h4.0M1790.0 709.5h4.0M1790.0 711.3h4.0M1790.0 713.1h4.0M1786.8 714.9h2.5M1786.8 716.5h1.0M1787.8 716.5h3.9M1809.5 719.6h1.2M1799.0 723.2h3.0M1796.0 725.2h9.0M1845.2 725.2h1.2M1786.8 727.2h1.0M1790.0 729.0h1.0M1813.9 720.8h3.1M1794.0 724.9h3.0M1823.3 724.9h2.0M1786.8 727.0h1.0M1790.0 729.0h3.5M1814.0 729.0h7.0M1793.3 733.1h3.5M1827.4 733.1h7.0M1821.9 735.0h9.0M1793.3 736.8h1.0M1800.2 736.8h9.0M1790.0 743.2h2.5M1794.1 745.0h1.0M1804.0 745.0h3.0M1810.9 745.0h5.0M1797.3 747.0h5.0M1803.2 747.0h4.0M1859.3 747.0h5.0M1803.7 749.1h2.0M1837.0 749.1h9.0M1793.3 751.0h2.5M1797.4 753.0h3.5M1802.7 754.8h4.0M1811.7 754.8h7.0M1844.3 754.8h2.0M1846.3 754.8h1.2M1793.3 757.3h3.5M1796.6 759.2h1.5M1809.9 759.2h2.0M1878.0 759.2h4.0M1793.3 763.3h2.5M1790.0 764.9h1.5M1786.8 767.1h3.5M1790.0 768.7h1.0M1845.1 770.7h0.6M1782.7 772.6h1.5M1779.4 774.7h3.3M1776.1 776.7h1.0M1772.1 778.8h2.5M1768.0 780.8h3.3M1764.7 782.9h1.5M1766.2 782.9h3.0M1764.7 791.1h1.5M1785.4 791.1h5.0M1764.7 792.7h3.5M1761.1 794.8h3.5M1765.5 794.8h1.6M1761.1 796.8h2.5M1800.8 261.2h3.0M1804.2 263.2h3.1M1804.2 265.2h4.3M1852.3 265.2h4.6M1807.7 267.1h3.1M1808.0 269.1h5.0M1877.5 269.1h5.5M1808.5 271.1h2.3M1843.0 271.1h4.7M1808.5 275.1h1.5M1808.5 279.1h1.5M1864.6 281.0h5.4M1805.4 283.0h6.9M1800.8 285.0h3.0M1804.2 287.0h3.1M1804.2 289.0h4.3M1852.3 289.0h4.6M1807.7 290.9h3.1M1808.0 292.9h5.0M1879.5 292.9h5.5M1808.5 294.9h2.3M1839.0 294.9h4.7M1808.5 298.9h1.5M1808.5 302.9h1.5M1864.6 304.8h5.4M1805.4 306.8h6.9M1800.8 308.8h3.0M1804.2 310.8h3.1M1804.2 312.8h4.3M1850.8 312.8h4.6M1807.7 314.8h3.1M1808.0 316.7h5.0M1877.5 316.7h5.5M1808.5 318.7h2.3M1843.0 318.7h4.7M1808.5 322.7h1.5M1808.5 326.7h1.5M1864.6 328.6h5.4M1805.4 330.6h6.9M1800.8 332.6h3.0M1804.2 334.6h3.1M1804.2 336.6h4.3M1846.8 336.6h4.6M1807.7 338.6h3.1M1808.0 340.6h5.0M1881.5 340.6h5.5M1808.5 342.6h2.3M1843.0 342.6h4.7M1808.5 346.6h1.5M1808.5 350.6h1.5M1808.5 354.6h1.5M1808.5 358.6h1.5M1864.6 360.6h5.4M1805.4 362.6h6.9M1800.8 364.5h3.0M1804.2 366.5h3.1M1804.2 368.5h4.3M1850.8 368.5h4.6M1807.7 370.4h3.1M1808.0 372.4h5.0M1877.5 372.4h5.5M1808.5 374.4h2.3M1844.5 374.4h4.7M1808.5 378.4h1.5M1808.5 382.4h1.5M1864.6 384.3h5.4M1805.4 386.3h6.9M1800.8 388.3h3.0M1804.2 390.3h3.1M1804.2 392.3h4.3M1848.8 392.3h4.6M1807.7 394.2h3.1M1808.0 396.2h5.0M1883.0 396.2h5.5M1808.5 398.2h2.3M1841.0 398.2h4.7M1808.5 402.2h1.5M1808.5 406.2h1.5M1864.6 408.1h5.4M1805.4 410.1h6.9M1771.0 521.3h0.9M1761.1 527.4h1.8M1773.7 529.4h0.9M1772.8 531.4h0.9M1764.7 533.5h1.8M1768.3 535.5h1.8M1780.0 535.5h1.8M1777.3 537.5h0.9M1779.1 539.6h0.9M1777.3 541.6h0.9M1771.9 545.7h1.8M1775.5 545.7h0.9M1797.1 545.7h1.8M1819.6 545.7h1.8M1841.2 545.7h1.8M1863.7 545.7h1.8M1874.5 545.7h0.9M1784.5 551.8h0.9M1771.9 555.8h3.6M1775.5 559.9h1.8M1811.5 559.9h0.9M1815.1 559.9h0.9M1793.5 561.9h0.9M1797.1 561.9h0.9M1775.5 566.0h3.6M1788.1 570.0h0.9M1764.7 580.2h1.8M1762.0 594.4h2.7M1762.0 596.4h2.7M1796.2 596.4h1.8M1773.7 602.5h0.9M1771.0 604.5h0.9M1764.7 606.6h0.9" stroke="#e0246a" stroke-width="1.5" opacity="0.56" fill="none"/>
<path d="M1766.0 76.8h4.0M1770.0 76.8h2.0M1766.1 83.0h8.4M1766.3 100.8h7.0M1773.3 100.8h4.0M1770.1 106.7h7.0M1792.1 106.7h1.2M1801.0 106.7h3.0M1797.8 115.7h5.0M1812.1 124.5h7.0M1812.3 127.5h1.2M1774.4 139.4h1.7M1775.2 142.2h2.0M1780.2 147.4h5.0M1797.0 147.4h4.0M1806.9 147.4h1.2M1817.1 147.4h1.2M1787.6 149.2h9.0M1807.0 149.2h9.0M1863.5 149.2h7.0M1773.2 155.2h1.2M1835.5 155.2h4.0M1775.8 157.2h3.0M1816.4 157.2h3.0M1773.7 159.0h1.2M1779.8 159.0h3.0M1793.9 159.0h2.0M1838.2 159.0h3.0M1887.2 159.0h1.2M1792.9 161.3h9.0M1806.3 161.3h0.9M1781.6 163.1h3.0M1789.4 165.1h4.0M1797.8 165.1h4.0M1847.8 165.1h2.0M1856.4 165.1h5.0M1861.8 165.1h9.0M1794.3 167.0h9.0M1824.9 167.0h4.0M1848.9 167.0h2.4M1800.7 178.9h1.2M1805.9 178.9h9.0M1780.9 185.2h4.0M1784.9 185.2h9.0M1806.7 185.2h3.0M1792.1 187.1h0.6M1796.9 188.7h1.2M1808.1 188.7h4.0M1801.3 190.9h9.0M1842.7 190.9h3.0M1813.5 197.2h2.0M1815.5 197.2h3.0M1789.3 199.4h4.0M1811.6 201.3h7.0M1828.9 201.3h5.0M1795.4 211.3h4.0M1810.8 211.3h2.0M1805.9 214.9h5.0M1815.9 214.9h5.0M1870.5 214.9h9.0M1833.9 216.8h1.2M1820.7 219.0h5.0M1806.4 220.9h4.0M1821.2 220.9h4.0M1886.2 220.9h2.0M1888.2 220.9h7.0M1810.6 222.7h9.0M1826.6 222.7h2.0M1844.2 224.7h2.0M1846.6 224.7h1.2M1877.1 224.7h3.7M1824.2 226.3h4.0M1841.0 226.3h3.0M1887.2 226.3h1.2M1809.8 230.4h3.0M1819.8 230.4h2.0M1814.4 239.9h2.0M1861.5 239.9h5.0M1866.5 239.9h2.0M1810.4 240.8h4.0M1830.8 240.8h2.0M1858.5 240.8h4.0M1868.4 240.8h1.2M1875.4 240.8h4.0M1844.3 244.9h9.0M1809.5 249.0h2.0M1854.4 249.0h3.0M1815.8 253.1h1.2M1826.0 253.1h1.2M1836.2 253.1h9.0M1865.9 253.1h4.0M1900.0 253.1h2.8M1807.9 257.2h2.5M1815.8 410.1h2.0M1817.8 410.1h9.0M1832.8 410.1h4.0M1825.1 412.3h7.0M1832.1 412.3h5.0M1863.2 412.3h3.0M1866.2 412.3h2.0M1831.4 416.3h5.0M1841.9 416.3h1.2M1845.5 416.3h9.0M1855.4 416.3h7.0M1862.1 418.3h2.0M1868.1 418.3h4.0M1893.4 418.3h7.0M1789.7 429.4h0.6M1810.0 434.6h9.0M1789.6 436.8h2.9M1818.4 438.7h3.0M1822.6 440.8h5.0M1845.2 440.8h3.0M1849.8 440.8h2.0M1871.6 442.8h7.0M1900.2 442.8h1.7M1782.7 446.9h2.0M1803.8 446.9h2.0M1806.2 446.9h5.0M1811.6 446.9h1.2M1812.8 446.9h1.2M1823.4 446.9h3.0M1826.8 446.9h4.0M1831.2 446.9h5.0M1858.4 446.9h4.0M1883.6 446.9h4.0M1888.0 446.9h3.0M1785.9 448.9h7.0M1805.3 448.9h7.0M1812.3 448.9h3.0M1819.3 448.9h7.0M1827.2 448.9h3.0M1831.1 448.9h1.2M1832.7 448.9h4.0M1843.7 448.9h3.0M1856.9 448.9h1.2M1785.9 450.8h1.2M1854.0 450.8h4.0M1873.1 450.8h7.0M1900.9 450.8h1.0M1802.3 452.8h9.0M1822.8 452.8h5.0M1840.1 452.8h1.2M1846.4 452.8h7.0M1853.4 452.8h4.0M1862.3 452.8h1.2M1873.4 452.8h5.0M1878.4 452.8h2.0M1880.8 452.8h7.0M1815.2 454.7h4.0M1828.0 454.7h7.0M1843.3 454.7h2.0M1785.9 456.7h5.0M1819.1 456.7h7.0M1837.6 456.7h4.0M1885.1 456.7h1.2M1893.7 456.7h1.2M1775.0 467.0h0.6M1795.4 469.0h9.0M1796.2 474.8h2.0M1813.1 474.8h4.0M1831.8 474.8h7.0M1886.1 474.8h1.2M1799.4 476.8h5.0M1852.0 476.8h2.0M1880.1 478.8h5.0M1787.6 480.9h3.0M1802.5 480.9h2.0M1844.7 480.9h2.0M1859.6 480.9h4.0M1789.4 486.6h2.0M1801.6 486.6h7.0M1817.0 486.6h5.0M1854.1 492.6h4.0M1807.4 494.8h9.0M1808.8 496.7h4.0M1816.0 508.2h6.5M1847.3 508.2h5.4M1820.6 510.3h7.2M1855.2 510.3h6.0M1769.6 581.2h5.0M1764.7 583.2h5.0M1776.3 594.6h4.0M1785.7 594.6h5.0M1784.4 600.8h7.0M1775.9 613.1h2.0M1804.1 613.1h2.0M1807.0 613.1h9.0M1769.4 616.9h7.0M1764.7 624.9h4.0M1781.8 624.9h7.0M1764.7 626.7h5.0M1775.1 626.7h1.2M1764.7 631.1h5.0M1764.7 633.0h3.0M1764.7 640.9h5.0M1780.1 645.0h1.2M1797.3 645.0h4.0M1768.0 649.1h4.0M1761.1 667.0h3.0M1795.0 721.4h5.0M1815.7 721.4h1.3M1790.0 725.2h4.0M1834.8 725.2h3.0M1850.4 725.2h2.0M1824.2 729.0h5.8M1790.0 724.9h4.0M1845.5 724.9h1.2M1788.2 727.0h4.0M1797.2 727.0h3.5M1805.6 733.1h9.0M1796.6 735.0h5.0M1814.4 736.8h1.2M1838.7 736.8h3.0M1854.7 736.8h3.0M1871.7 736.8h2.0M1795.1 745.0h5.0M1795.3 747.0h2.0M1807.2 747.0h3.0M1811.1 747.0h5.0M1837.8 747.0h7.0M1874.2 747.0h5.0M1879.6 747.0h7.0M1887.0 747.0h1.2M1793.3 749.1h5.0M1809.6 749.1h1.2M1822.1 749.1h5.0M1828.0 749.1h9.0M1850.3 749.1h3.0M1810.2 753.0h7.0M1838.8 753.0h4.0M1874.9 753.0h1.2M1812.3 759.2h9.0M1826.1 759.2h7.0M1837.1 759.2h7.0M1854.0 759.2h1.2M1882.9 759.2h3.0M1832.1 770.7h9.0M1841.1 770.7h4.0M1784.2 772.6h1.2M1769.8 784.9h9.0M1766.2 791.1h1.2M1778.2 792.7h5.0M1793.6 792.7h2.0M1761.1 800.9h14.9M1761.1 802.8h14.5M1761.1 805.0h15.6M1830.0 269.1h4.6M1898.5 271.1h4.5M1840.8 275.1h3.0M1892.3 275.1h4.7M1819.2 281.0h4.6M1830.0 292.9h4.6M1894.5 294.9h4.5M1842.3 298.9h3.0M1893.8 298.9h4.7M1819.2 304.8h4.6M1830.0 316.7h4.6M1898.5 318.7h4.5M1836.8 322.7h3.0M1888.3 322.7h4.7M1819.2 328.6h4.6M1830.0 340.6h4.6M1898.5 342.6h4.5M1840.8 346.6h3.0M1892.3 346.6h4.7M1838.8 350.6h3.0M1890.3 350.6h4.7M1840.8 354.6h3.0M1892.3 354.6h4.7M1819.2 360.6h4.6M1830.0 372.4h4.6M1900.0 374.4h3.5M1836.8 378.4h3.0M1888.3 378.4h4.7M1819.2 384.3h4.6M1830.0 396.2h4.6M1896.5 398.2h4.5M1838.8 402.2h3.0M1890.3 402.2h4.7M1819.2 408.1h4.6M1764.7 527.4h4.5M1768.3 533.5h4.5M1778.2 545.7h5.4M1799.8 545.7h5.4M1822.3 545.7h5.4M1843.9 545.7h5.4M1775.5 547.7h3.6M1779.1 559.9h16.2M1779.1 561.9h4.5M1779.1 568.0h3.6M1768.3 582.2h3.6M1764.7 584.2h3.6M1780.9 596.4h3.6M1774.6 602.5h4.5M1771.9 604.5h4.5" stroke="#5fc8dd" stroke-width="1.5" opacity="0.56" fill="none"/>
<path d="M1790.1 446.9h1.2M1791.3 446.9h2.0M1837.1 446.9h1.2M1849.9 448.9h3.0M1870.4 448.9h7.0M1887.3 448.9h7.0M1787.5 450.8h7.0M1864.1 450.8h9.0M1783.9 452.8h4.0M1857.4 452.8h4.0M1901.1 452.8h0.9M1787.5 454.7h4.0M1835.0 454.7h3.0M1838.9 454.7h4.0M1886.3 456.7h7.0M1837.0 269.1h18.4M1837.0 292.9h18.4M1837.0 316.7h18.4M1837.0 340.6h18.4M1837.0 372.4h18.4M1837.0 396.2h18.4M1775.5 529.4h3.6M1876.3 545.7h6.3M1786.3 551.8h4.5M1807.0 561.9h3.6M1789.9 570.0h4.5M1793.5 596.4h2.7" stroke="#a27bee" stroke-width="1.5" opacity="0.56" fill="none"/>
<path d="M1763.6 136.5h1.2M1769.1 144.6h5.0M1768.2 159.0h3.0M1774.9 159.0h4.0M1784.0 159.0h9.0M1795.9 159.0h5.0M1841.2 159.0h3.0M1766.6 178.9h7.0M1794.2 178.9h4.0M1799.1 178.9h1.2M1779.3 187.1h4.0M1799.0 188.7h5.0M1795.9 190.9h5.0M1837.7 190.9h5.0M1856.5 190.9h5.0M1861.5 190.9h5.0M1895.4 190.9h4.0M1821.5 199.4h3.0M1803.8 209.2h7.0M1821.3 214.9h9.0M1846.2 214.9h5.0M1828.6 226.3h4.0M1837.5 230.4h3.0M1846.4 230.4h5.0M1884.5 230.4h5.0M1890.4 230.4h3.0M1893.8 230.4h3.0M1806.3 232.4h7.0M1813.3 232.4h2.0M1807.8 234.2h3.0M1838.5 236.1h7.0M1811.5 249.0h2.0M1826.0 249.0h1.2M1827.2 249.0h7.0M1838.8 410.1h7.0M1818.4 416.3h1.2M1831.2 418.3h7.0M1848.2 418.3h9.0M1789.0 438.7h3.0M1799.4 438.7h5.0M1786.6 440.8h5.0M1806.9 440.8h1.2M1801.6 442.8h5.0M1852.6 442.8h7.0M1784.7 446.9h3.0M1794.2 446.9h3.0M1800.2 446.9h2.0M1872.8 446.9h3.0M1876.7 446.9h3.0M1797.9 448.9h7.0M1852.9 448.9h4.0M1861.4 448.9h9.0M1858.0 450.8h4.0M1890.7 450.8h3.0M1788.3 452.8h2.0M1790.3 452.8h4.0M1795.2 452.8h1.2M1895.1 454.7h1.9M1805.3 456.7h9.0M1841.6 456.7h3.0M1855.7 456.7h7.0M1782.4 469.0h4.0M1786.4 469.0h9.0M1806.1 474.8h7.0M1804.4 476.8h5.0M1890.3 476.8h5.9M1797.9 478.8h4.0M1831.8 480.9h5.0M1877.4 480.9h7.0M1812.0 486.6h5.0M1793.5 488.7h1.2M1795.1 492.6h4.0M1858.1 492.6h5.0M1832.6 496.7h9.0M1791.1 594.6h7.9M1764.5 672.7h1.8M1763.3 676.8h3.0M1803.0 686.1h6.0M1803.0 687.9h6.0M1803.0 689.7h6.0M1803.0 691.5h6.0M1803.0 693.3h6.0M1803.0 695.1h6.0M1803.0 704.1h6.0M1803.0 705.9h6.0M1803.0 707.7h6.0M1803.0 709.5h6.0M1803.0 711.3h6.0M1803.0 713.1h6.0M1799.3 729.0h3.0M1841.7 736.8h3.0M1857.7 736.8h3.0M1798.5 759.2h1.2M1833.1 759.2h4.0M1814.8 792.7h2.0M1810.8 263.2h7.2M1815.4 269.1h13.1M1810.8 287.0h7.2M1815.4 292.9h13.1M1810.8 310.8h7.2M1815.4 316.7h13.1M1810.8 334.6h7.2M1815.4 340.6h13.1M1810.8 366.5h7.2M1815.4 372.4h13.1M1810.8 390.3h7.2M1815.4 396.2h13.1M1765.6 594.4h1.8M1765.6 596.4h4.5" stroke="#98cf2e" stroke-width="1.5" opacity="0.56" fill="none"/>
<path d="M1761.1 98.4h23.2M1761.1 110.0h24.0M1761.1 121.8h26.5M1761.1 180.9h51.0M1797.4 490.7h91.5M1797.4 502.9h18.0M1797.4 504.9h18.0M1772.9 508.2h41.0M1823.6 508.2h22.6M1853.8 508.2h27.0M1772.9 510.3h45.3M1828.9 510.3h25.0M1862.3 510.3h29.8M1797.4 512.7h8.2M1795.8 515.2h6.5M1794.1 517.3h4.1M1761.1 525.4h3.6M1765.6 525.4h1.8M1768.3 525.4h5.4M1774.6 525.4h4.5M1780.0 525.4h1.8M1782.7 525.4h6.3M1771.9 543.6h3.6M1776.4 543.6h8.1M1785.4 543.6h1.8M1788.1 543.6h1.8M1790.8 543.6h6.3M1798.0 543.6h0.9M1799.8 543.6h5.4M1806.1 543.6h1.8M1808.8 543.6h7.2M1775.5 557.8h3.6M1780.0 557.8h8.1M1789.0 557.8h1.8M1791.7 557.8h1.8M1794.4 557.8h5.4M1800.7 557.8h11.7" stroke="#7a7663" stroke-width="1.5" opacity="0.56" fill="none"/>
</svg>
<div id="vtrack"><div id="vthumb"></div></div>
</div>
<div id="status"><svg id="sbic" width="17" height="12" viewBox="0 0 17 12"><rect x="0.5" y="0.5" width="15.5" height="11" rx="1.5" fill="#b5bac4" stroke="#7b808a"/><rect x="0.5" y="7.6" width="15.5" height="4" rx="1" fill="#7b808a"/></svg>
<span style="left:40px;letter-spacing:-0.12px">Line 204, Column 58</span><span style="left:1736px;letter-spacing:-0.3px">Tab Size: 4</span><span style="left:1851px;letter-spacing:-0.8px">PHP</span></div>
</body></html>
